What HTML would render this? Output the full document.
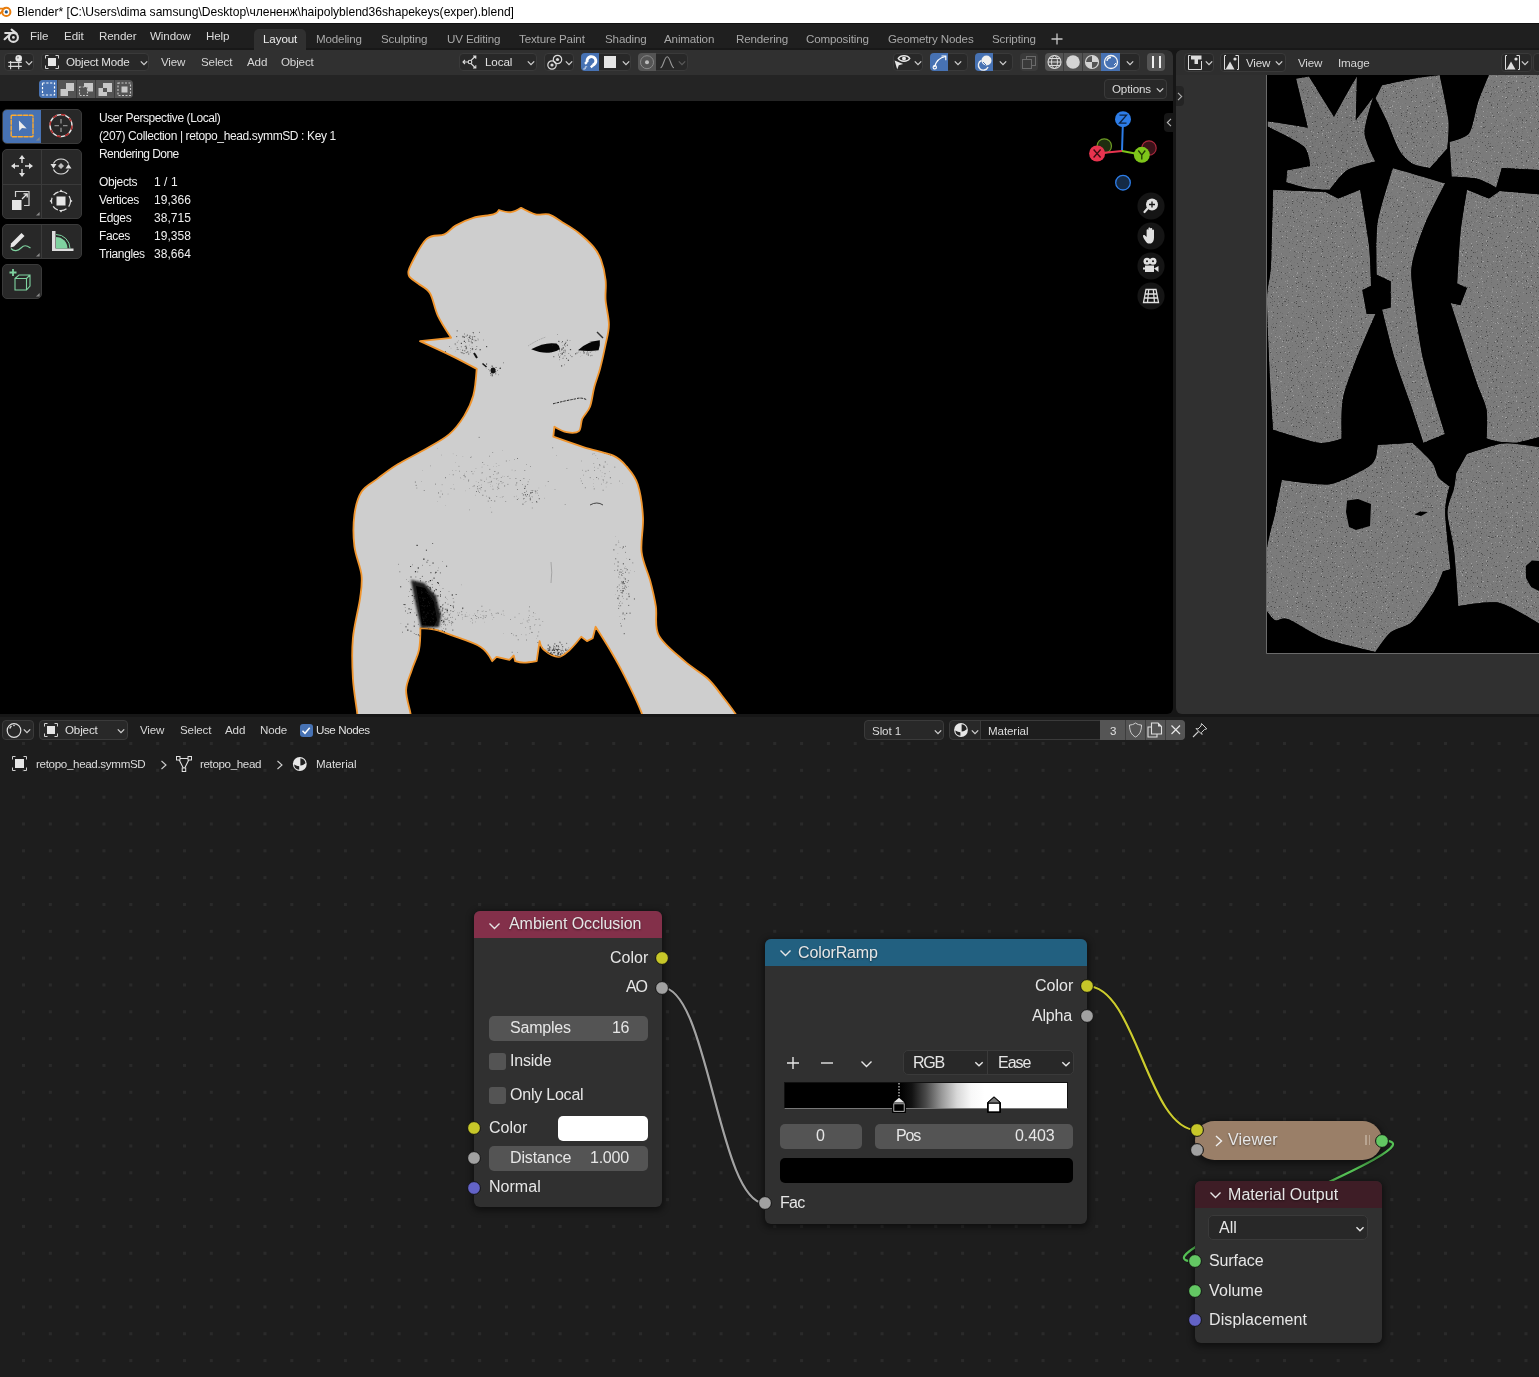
<!DOCTYPE html>
<html><head><meta charset="utf-8">
<style>
*{box-sizing:border-box;margin:0;padding:0}
html,body{width:1539px;height:1377px;overflow:hidden;background:#161616;font-family:"Liberation Sans",sans-serif;position:relative}
.a{position:absolute}
.t{position:absolute;white-space:nowrap;font-size:11.6px;color:#d9d9d9;line-height:1;will-change:transform}
svg{position:absolute;overflow:visible}
</style></head><body>
<div class="a" style="left:0px;top:0px;width:1539px;height:23px;background:#fff;"></div>
<svg style="left:0px;top:4px;" width="14" height="14" viewBox="0 0 14 14"><circle cx="6.3" cy="7.9" r="4.1" fill="#fff" stroke="#e87d0d" stroke-width="2"/><circle cx="6.3" cy="7.9" r="1.6" fill="#265787"/><path d="M0 4.6 H4.5 M0 9.5 L2.8 7" fill="none" stroke="#e87d0d" stroke-width="1.8" stroke-linecap="round"/></svg>
<div class="t" style="left:17.0px;top:6.01px;font-size:12.1px;line-height:12.1px;color:#000;letter-spacing:-0.02px;">Blender* [C:\Users\dima samsung\Desktop\члененж\haipolyblend36shapekeys(exper).blend]</div>
<div class="a" style="left:0px;top:23px;width:1539px;height:27px;background:#1f1f1f;"></div>
<div class="a" style="left:0px;top:23px;width:1539px;height:1px;background:#121212;"></div>
<div class="a" style="left:0px;top:48px;width:1539px;height:2px;background:#181818;"></div>
<svg style="left:0px;top:24px;" width="22" height="22" viewBox="0 0 22 22"><circle cx="13.4" cy="13.4" r="4.5" fill="none" stroke="#dcdcdc" stroke-width="2.1"/><circle cx="13.4" cy="13.4" r="1.4" fill="#dcdcdc"/><path d="M5.2 9 H12.5 M4.6 15.2 L9.6 10.8 M11.6 5.6 L16.6 9.6" fill="none" stroke="#dcdcdc" stroke-width="2.1" stroke-linecap="round"/></svg>
<div class="t" style="left:29.5px;top:30.13px;font-size:11.6px;line-height:11.6px;color:#dcdcdc;letter-spacing:-0.1px;">File</div>
<div class="t" style="left:63.5px;top:30.13px;font-size:11.6px;line-height:11.6px;color:#dcdcdc;letter-spacing:-0.1px;">Edit</div>
<div class="t" style="left:98.5px;top:30.13px;font-size:11.6px;line-height:11.6px;color:#dcdcdc;letter-spacing:-0.1px;">Render</div>
<div class="t" style="left:149.5px;top:30.13px;font-size:11.6px;line-height:11.6px;color:#dcdcdc;letter-spacing:-0.1px;">Window</div>
<div class="t" style="left:205.5px;top:30.13px;font-size:11.6px;line-height:11.6px;color:#dcdcdc;letter-spacing:-0.1px;">Help</div>
<div class="a" style="left:254px;top:29px;width:52px;height:21px;background:#303030;border-radius:5px 5px 0 0"></div>
<div class="t" style="left:262.5px;top:33.23px;font-size:11.6px;line-height:11.6px;color:#ececec;letter-spacing:-0.1px;">Layout</div>
<div class="t" style="left:316.4px;top:33.23px;font-size:11.6px;line-height:11.6px;color:#a8a8a8;letter-spacing:-0.15px;">Modeling</div>
<div class="t" style="left:381.4px;top:33.23px;font-size:11.6px;line-height:11.6px;color:#a8a8a8;letter-spacing:-0.15px;">Sculpting</div>
<div class="t" style="left:447.4px;top:33.23px;font-size:11.6px;line-height:11.6px;color:#a8a8a8;letter-spacing:-0.15px;">UV Editing</div>
<div class="t" style="left:519.4px;top:33.23px;font-size:11.6px;line-height:11.6px;color:#a8a8a8;letter-spacing:-0.15px;">Texture Paint</div>
<div class="t" style="left:605.4px;top:33.23px;font-size:11.6px;line-height:11.6px;color:#a8a8a8;letter-spacing:-0.15px;">Shading</div>
<div class="t" style="left:664.4px;top:33.23px;font-size:11.6px;line-height:11.6px;color:#a8a8a8;letter-spacing:-0.15px;">Animation</div>
<div class="t" style="left:735.8px;top:33.23px;font-size:11.6px;line-height:11.6px;color:#a8a8a8;letter-spacing:-0.15px;">Rendering</div>
<div class="t" style="left:805.9px;top:33.23px;font-size:11.6px;line-height:11.6px;color:#a8a8a8;letter-spacing:-0.15px;">Compositing</div>
<div class="t" style="left:887.8px;top:33.23px;font-size:11.6px;line-height:11.6px;color:#a8a8a8;letter-spacing:-0.15px;">Geometry Nodes</div>
<div class="t" style="left:991.9px;top:33.23px;font-size:11.6px;line-height:11.6px;color:#a8a8a8;letter-spacing:-0.15px;">Scripting</div>
<svg style="left:1051px;top:33px;" width="12" height="12" viewBox="0 0 12 12"><path d="M6 0.5 V11.5 M0.5 6 H11.5" stroke="#c8c8c8" stroke-width="1.3"/></svg>
<div class="a" style="left:0;top:50px;width:1173px;height:664px;background:#000;border-radius:0 6px 6px 0;overflow:hidden">
<div class="a" style="left:0px;top:0px;width:1173px;height:25px;background:#303030;"></div>
<div class="a" style="left:0px;top:25px;width:1173px;height:26px;background:#242424;"></div>
</div>
<div class="a" style="left:4px;top:53px;width:30px;height:18px;background:#282828;border-radius:4px;border:1px solid #3a3a3a;"></div>
<svg style="left:7px;top:55px;" width="18" height="15" viewBox="0 0 18 15"><path d="M1.3 7.4 H14.8 M1.3 11.4 H14.8 M3.6 6 V14.2 M11.7 7 V14.2" stroke="#d9d9d9" stroke-width="1.1"/><circle cx="11.7" cy="3.4" r="3.3" fill="#e8e8e8"/><circle cx="10.9" cy="2.6" r="1.1" fill="#9a9a9a"/></svg>
<svg style="left:23.5px;top:58.5px;" width="10" height="8" viewBox="0 0 10 8"><path d="M1.7999999999999998 2.4 L5 5.6 L8.2 2.4" fill="none" stroke="#cfcfcf" stroke-width="1.3"/></svg>
<div class="a" style="left:41px;top:53px;width:108px;height:18px;background:#282828;border-radius:4px;border:1px solid #3a3a3a;"></div>
<svg style="left:45px;top:55px;" width="14" height="14" viewBox="0 0 14 14"><path d="M0.5 3.5 V0.5 H3.5 M10.5 0.5 H13.5 V3.5 M13.5 10.5 V13.5 H10.5 M3.5 13.5 H0.5 V10.5" fill="none" stroke="#cfcfcf" stroke-width="1"/><rect x="3" y="3" width="8" height="8" fill="#e6e6e6"/></svg>
<div class="t" style="left:66.0px;top:56.43px;font-size:11.6px;line-height:11.6px;color:#e0e0e0;letter-spacing:-0.2px;">Object Mode</div>
<svg style="left:138.5px;top:58.5px;" width="10" height="8" viewBox="0 0 10 8"><path d="M1.7999999999999998 2.4 L5 5.6 L8.2 2.4" fill="none" stroke="#cfcfcf" stroke-width="1.3"/></svg>
<div class="t" style="left:161.4px;top:56.43px;font-size:11.6px;line-height:11.6px;color:#d6d6d6;letter-spacing:-0.15px;">View</div>
<div class="t" style="left:201.4px;top:56.43px;font-size:11.6px;line-height:11.6px;color:#d6d6d6;letter-spacing:-0.15px;">Select</div>
<div class="t" style="left:247.4px;top:56.43px;font-size:11.6px;line-height:11.6px;color:#d6d6d6;letter-spacing:-0.15px;">Add</div>
<div class="t" style="left:281.4px;top:56.43px;font-size:11.6px;line-height:11.6px;color:#d6d6d6;letter-spacing:-0.15px;">Object</div>
<div class="a" style="left:459px;top:53px;width:78px;height:18px;background:#282828;border-radius:4px;border:1px solid #3a3a3a;"></div>
<svg style="left:462px;top:54px;" width="16" height="16" viewBox="0 0 16 16"><path d="M1 8 H7 M3 6 L1 8 L3 10 M9 6.5 L13.5 2 M11 2 H13.8 V4.8 M9 9.5 L13.5 14 M11 14 H13.8 V11.2" fill="none" stroke="#d9d9d9" stroke-width="1.1"/><circle cx="8" cy="8" r="1.8" fill="none" stroke="#d9d9d9" stroke-width="1.1"/></svg>
<div class="t" style="left:484.6px;top:56.43px;font-size:11.6px;line-height:11.6px;color:#e0e0e0;letter-spacing:-0.1px;">Local</div>
<svg style="left:526px;top:58.8px;" width="10" height="8" viewBox="0 0 10 8"><path d="M1.7999999999999998 2.4 L5 5.6 L8.2 2.4" fill="none" stroke="#cfcfcf" stroke-width="1.3"/></svg>
<div class="a" style="left:544px;top:53px;width:30px;height:18px;background:#282828;border-radius:4px;border:1px solid #3a3a3a;"></div>
<svg style="left:547px;top:54px;" width="16" height="16" viewBox="0 0 16 16"><circle cx="5" cy="11" r="4.2" fill="none" stroke="#d9d9d9" stroke-width="1.2"/><circle cx="5" cy="11" r="1.6" fill="#d9d9d9"/><circle cx="10.5" cy="5.5" r="4.2" fill="none" stroke="#d9d9d9" stroke-width="1.2"/><circle cx="10.5" cy="5.5" r="1.6" fill="#d9d9d9"/></svg>
<svg style="left:563.5px;top:58.8px;" width="10" height="8" viewBox="0 0 10 8"><path d="M1.7999999999999998 2.4 L5 5.6 L8.2 2.4" fill="none" stroke="#cfcfcf" stroke-width="1.3"/></svg>
<div class="a" style="left:581px;top:53px;width:50px;height:18px;background:#282828;border-radius:4px;border:1px solid #3a3a3a;"></div>
<div class="a" style="left:581px;top:53px;width:18px;height:18px;background:#4772b3;border-radius:4px;border-radius:4px 0 0 4px"></div>
<svg style="left:582px;top:54px;" width="16" height="16" viewBox="0 0 16 16"><path d="M5.2 8.2 A4.4 4.4 0 1 1 10.4 11.3" stroke="#fff" stroke-width="2.9" fill="none"/><path d="M2.2 9.1 L4.2 7.1 L5.8 8.7 L3.8 10.7 Z M8 12.6 L10 10.6 L11.6 12.2 L9.6 14.2 Z" fill="#fff"/><path d="M1.2 15 H3.2 V12.8 H5.2" fill="none" stroke="#dfe6f2" stroke-width="0.9"/></svg>
<div class="a" style="left:604px;top:56px;width:12px;height:12px;background:#e6e6e6;"></div>
<svg style="left:620.5px;top:58.8px;" width="10" height="8" viewBox="0 0 10 8"><path d="M1.7999999999999998 2.4 L5 5.6 L8.2 2.4" fill="none" stroke="#cfcfcf" stroke-width="1.3"/></svg>
<div class="a" style="left:638px;top:53px;width:50px;height:18px;background:#282828;border-radius:4px;border:1px solid #3a3a3a;"></div>
<div class="a" style="left:638px;top:53px;width:18px;height:18px;background:#545454;border-radius:4px;border-radius:4px 0 0 4px"></div>
<svg style="left:639px;top:54px;" width="16" height="16" viewBox="0 0 16 16"><circle cx="8" cy="8.2" r="6.5" fill="none" stroke="#8a8a8a" stroke-width="1"/><circle cx="8" cy="8.2" r="2" fill="#bdbdbd"/></svg>
<svg style="left:660px;top:55px;" width="16" height="14" viewBox="0 0 16 14"><path d="M0.5 12.8 C3.2 12.8 4.2 1.8 7.2 1.8 C10.2 1.8 11.2 12.8 14 12.8" fill="none" stroke="#9a9a9a" stroke-width="1.1"/></svg>
<svg style="left:677.3px;top:58.8px;" width="10" height="8" viewBox="0 0 10 8"><path d="M1.7999999999999998 2.4 L5 5.6 L8.2 2.4" fill="none" stroke="#5a5a5a" stroke-width="1.3"/></svg>
<div class="a" style="left:893px;top:53px;width:30px;height:18px;background:#282828;border-radius:4px;border:1px solid #3a3a3a;"></div>
<svg style="left:893px;top:53px;" width="18" height="18" viewBox="0 0 18 18"><path d="M5.2 5.4 C7.5 1.6 14.5 1.6 16.8 5.4 C14.5 9.2 7.5 9.2 5.2 5.4Z" fill="none" stroke="#e6e6e6" stroke-width="1.3"/><circle cx="11" cy="5.4" r="1.9" fill="#e6e6e6"/><path d="M1.6 7.6 L10.2 11 L5.8 12.2 L4.2 16.6 Z" fill="#e6e6e6"/></svg>
<svg style="left:912.5px;top:58.8px;" width="10" height="8" viewBox="0 0 10 8"><path d="M1.7999999999999998 2.4 L5 5.6 L8.2 2.4" fill="none" stroke="#cfcfcf" stroke-width="1.3"/></svg>
<div class="a" style="left:930px;top:53px;width:38px;height:18px;background:#282828;border-radius:4px;border:1px solid #3a3a3a;"></div>
<div class="a" style="left:930px;top:53px;width:18px;height:18px;background:#4772b3;border-radius:4px;border-radius:4px 0 0 4px"></div>
<svg style="left:932px;top:54px;" width="15" height="16" viewBox="0 0 15 16"><path d="M2.5 13 C4 7 8 3.5 13.5 2.5" fill="none" stroke="#fff" stroke-width="1.2"/><path d="M9.5 2 H13.8 V6.3" fill="none" stroke="#fff" stroke-width="1.2"/><circle cx="2.8" cy="13.3" r="1.7" fill="none" stroke="#fff" stroke-width="1.1"/></svg>
<svg style="left:953px;top:58.8px;" width="10" height="8" viewBox="0 0 10 8"><path d="M1.7999999999999998 2.4 L5 5.6 L8.2 2.4" fill="none" stroke="#cfcfcf" stroke-width="1.3"/></svg>
<div class="a" style="left:975px;top:53px;width:38px;height:18px;background:#282828;border-radius:4px;border:1px solid #3a3a3a;"></div>
<div class="a" style="left:975px;top:53px;width:18px;height:18px;background:#4772b3;border-radius:4px;border-radius:4px 0 0 4px"></div>
<svg style="left:977px;top:54px;" width="15" height="16" viewBox="0 0 15 16"><circle cx="9.5" cy="6.5" r="5" fill="#f0f0f0"/><path d="M4.5 6.5 A5 5 0 1 0 11 13" fill="none" stroke="#f0f0f0" stroke-width="1.4"/><path d="M6 8 L9 11" stroke="#4772b3" stroke-width="1"/></svg>
<svg style="left:998px;top:58.8px;" width="10" height="8" viewBox="0 0 10 8"><path d="M1.7999999999999998 2.4 L5 5.6 L8.2 2.4" fill="none" stroke="#cfcfcf" stroke-width="1.3"/></svg>
<div class="a" style="left:1020px;top:53px;width:18px;height:18px;background:#3a3a3a;border-radius:4px;"></div>
<svg style="left:1021px;top:54px;" width="16" height="16" viewBox="0 0 16 16"><rect x="5.5" y="2.5" width="9" height="9" fill="none" stroke="#6a6a6a" stroke-width="1"/><rect x="1.5" y="5.5" width="9" height="9" fill="#3a3a3a" stroke="#6a6a6a" stroke-width="1"/></svg>
<div class="a" style="left:1045px;top:53px;width:95px;height:18px;background:#282828;border-radius:4px;border:1px solid #3a3a3a;"></div>
<div class="a" style="left:1045px;top:53px;width:75px;height:18px;background:#545454;border-radius:4px;border-radius:4px 0 0 4px"></div>
<div class="a" style="left:1063px;top:53px;width:1px;height:18px;background:#3d3d3d;"></div>
<div class="a" style="left:1082px;top:53px;width:1px;height:18px;background:#3d3d3d;"></div>
<div class="a" style="left:1101px;top:53px;width:1px;height:18px;background:#3d3d3d;"></div>
<div class="a" style="left:1101px;top:53px;width:19px;height:18px;background:#4772b3;"></div>
<svg style="left:1046px;top:54px;" width="17" height="16" viewBox="0 0 17 16"><circle cx="8.5" cy="8" r="6.5" fill="none" stroke="#dadada" stroke-width="1.1"/><ellipse cx="8.5" cy="8" rx="3" ry="6.5" fill="none" stroke="#dadada" stroke-width="1"/><path d="M2 8 H15 M3 4.5 H14 M3 11.5 H14" stroke="#dadada" stroke-width="1"/></svg>
<svg style="left:1064px;top:54px;" width="18" height="16" viewBox="0 0 18 16"><circle cx="9" cy="8" r="6.8" fill="#d4d4d4"/></svg>
<svg style="left:1083px;top:54px;" width="18" height="16" viewBox="0 0 18 16"><circle cx="9" cy="8" r="6.5" fill="none" stroke="#d4d4d4" stroke-width="1.2"/><path d="M9 1.5 A6.5 6.5 0 0 1 15.5 8 L9 8 Z" fill="#d4d4d4"/><path d="M2.5 8 A6.5 6.5 0 0 0 9 14.5 L9 8 Z" fill="#d4d4d4"/></svg>
<svg style="left:1102px;top:54px;" width="18" height="16" viewBox="0 0 18 16"><circle cx="9" cy="8" r="6.5" fill="none" stroke="#f4f4f4" stroke-width="1.3"/><path d="M5 7 A4 4 0 0 1 9 3.5" fill="none" stroke="#f4f4f4" stroke-width="1.3"/><path d="M12 11 L14 9" stroke="#f4f4f4" stroke-width="1"/></svg>
<svg style="left:1125px;top:58.8px;" width="10" height="8" viewBox="0 0 10 8"><path d="M1.7999999999999998 2.4 L5 5.6 L8.2 2.4" fill="none" stroke="#cfcfcf" stroke-width="1.3"/></svg>
<div class="a" style="left:1147px;top:53px;width:18px;height:18px;background:#545454;border-radius:4px;"></div>
<div class="a" style="left:1152px;top:56px;width:2.4px;height:12px;background:#f0f0f0;"></div>
<div class="a" style="left:1158.5px;top:56px;width:2.4px;height:12px;background:#f0f0f0;"></div>
<div class="a" style="left:39px;top:80px;width:94px;height:18px;background:#545454;border-radius:4px;"></div>
<div class="a" style="left:39px;top:80px;width:18px;height:18px;background:#4772b3;border-radius:4px;border-radius:4px 0 0 4px"></div>
<div class="a" style="left:57px;top:80px;width:1px;height:18px;background:#3d3d3d;"></div>
<div class="a" style="left:76px;top:80px;width:1px;height:18px;background:#3d3d3d;"></div>
<div class="a" style="left:95px;top:80px;width:1px;height:18px;background:#3d3d3d;"></div>
<div class="a" style="left:114px;top:80px;width:1px;height:18px;background:#3d3d3d;"></div>
<svg style="left:40px;top:81px;" width="17" height="16" viewBox="0 0 17 16"><rect x="2.5" y="2" width="12" height="12" fill="none" stroke="#fff" stroke-width="1.2" stroke-dasharray="2.2 1.6"/></svg>
<svg style="left:59px;top:81px;" width="17" height="16" viewBox="0 0 17 16"><path d="M1.5 8 H7 V2 H15 V10 H9 V15 H1.5 Z" fill="#c8c8c8"/></svg>
<svg style="left:78px;top:81px;" width="17" height="16" viewBox="0 0 17 16"><rect x="1.5" y="6" width="8" height="8.5" fill="none" stroke="#c8c8c8" stroke-width="1.1" stroke-dasharray="1.8 1.4"/><path d="M6 2 H15 V10.5 H9.5 V6 H6 Z" fill="#c8c8c8"/></svg>
<svg style="left:97px;top:81px;" width="17" height="16" viewBox="0 0 17 16"><path d="M1.5 7 H6 V2 H15 V11 H10 V15 H1.5 Z M6 7 V11 H10 V7 Z" fill="#c8c8c8" fill-rule="evenodd"/></svg>
<svg style="left:116px;top:81px;" width="17" height="16" viewBox="0 0 17 16"><rect x="2" y="2" width="12.5" height="12.5" fill="none" stroke="#c8c8c8" stroke-width="1.1" stroke-dasharray="2 1.5"/><rect x="5.5" y="5.5" width="6" height="6" fill="#c8c8c8"/></svg>
<div class="a" style="left:1104px;top:79px;width:63px;height:20px;background:#282828;border-radius:4px;border:1px solid #3a3a3a;"></div>
<div class="t" style="left:1111.5px;top:83.43px;font-size:11.6px;line-height:11.6px;color:#dcdcdc;letter-spacing:-0.15px;">Options</div>
<svg style="left:1155px;top:85.5px;" width="10" height="8" viewBox="0 0 10 8"><path d="M1.7999999999999998 2.4 L5 5.6 L8.2 2.4" fill="none" stroke="#cfcfcf" stroke-width="1.3"/></svg>
<div class="a" style="left:2px;top:109px;width:80px;height:35px;background:#282828;border-radius:5px;border:1px solid #3a3a3a;"></div>
<div class="a" style="left:3px;top:110px;width:38.3px;height:33px;background:#4772b3;border-radius:4px 0 0 4px"></div>
<div class="a" style="left:2px;top:149px;width:80px;height:70px;background:#282828;border-radius:5px;border:1px solid #3a3a3a;"></div>
<div class="a" style="left:41px;top:149px;width:1px;height:70px;background:#3a3a3a;"></div>
<div class="a" style="left:2px;top:183.5px;width:80px;height:1px;background:#3a3a3a;"></div>
<div class="a" style="left:2px;top:224px;width:80px;height:35px;background:#282828;border-radius:5px;border:1px solid #3a3a3a;"></div>
<div class="a" style="left:41px;top:224px;width:1px;height:35px;background:#3a3a3a;"></div>
<div class="a" style="left:2px;top:264px;width:40px;height:35px;background:#282828;border-radius:5px;border:1px solid #3a3a3a;"></div>
<svg style="left:35.699999999999996px;top:137.20000000000002px;" width="4" height="4" viewBox="0 0 4 4"><path d="M3.6 0 V3.6 H0 Z" fill="#8a8a8a"/></svg>
<svg style="left:35.699999999999996px;top:212.4px;" width="4" height="4" viewBox="0 0 4 4"><path d="M3.6 0 V3.6 H0 Z" fill="#8a8a8a"/></svg>
<svg style="left:35.699999999999996px;top:252.6px;" width="4" height="4" viewBox="0 0 4 4"><path d="M3.6 0 V3.6 H0 Z" fill="#8a8a8a"/></svg>
<svg style="left:35.699999999999996px;top:292.59999999999997px;" width="4" height="4" viewBox="0 0 4 4"><path d="M3.6 0 V3.6 H0 Z" fill="#8a8a8a"/></svg>
<svg style="left:10px;top:114px;" width="24" height="24" viewBox="0 0 24 24"><rect x="1.2" y="1.3" width="21.8" height="21.5" rx="0.8" fill="none" stroke="#ffab2e" stroke-width="1.4" stroke-dasharray="4.2 1.6" stroke-linecap="round"/><path d="M8.9 6.6 L16.7 14.4 L12 14 L9.2 17.1 Z" fill="#ececec"/></svg>
<svg style="left:49px;top:113px;" width="24" height="24" viewBox="0 0 24 24"><circle cx="12" cy="12.6" r="11" fill="none" stroke="#e8e8e8" stroke-width="1.4"/><circle cx="12" cy="12.6" r="11" fill="none" stroke="#b02a2a" stroke-width="1.5" stroke-dasharray="4.3 4.3"/><path d="M12 6 V10.5 M12 14.7 V19 M5.5 12.6 H10 M14 12.6 H18.5" stroke="#8c8c8c" stroke-width="1.4"/></svg>
<svg style="left:10px;top:154px;" width="24" height="24" viewBox="0 0 24 24"><path d="M12 1 L15 5 H9 Z M12 23 L15 19 H9 Z M1 12 L5 9 V15 Z M23 12 L19 9 V15 Z" fill="#e0e0e0"/><path d="M12 5 V9 M12 15 V19 M5 12 H9 M15 12 H19" stroke="#e0e0e0" stroke-width="1.4"/></svg>
<svg style="left:49px;top:154px;" width="24" height="24" viewBox="0 0 24 24"><path d="M4.5 9.5 A8.5 8.5 0 0 1 19.5 9.5 M19.5 15.5 A8.5 8.5 0 0 1 4.5 15.5" fill="none" stroke="#e0e0e0" stroke-width="1.2"/><path d="M12 9 L15 12 L12 15 L9 12 Z" fill="#bdbdbd"/><path d="M1.5 10 H7.5 L4.5 14.5 Z M16.5 14.5 H22.5 L19.5 10 Z" fill="#e0e0e0"/></svg>
<svg style="left:10px;top:189px;" width="24" height="24" viewBox="0 0 24 24"><path d="M5.5 8 V2.5 H19 V16.5 H14" fill="none" stroke="#d0d0d0" stroke-width="1.2"/><rect x="2" y="11" width="9.5" height="10" fill="#e6e6e6"/><path d="M12 10 L17 5 M13.5 4.8 H17.2 V8.5" fill="none" stroke="#e6e6e6" stroke-width="1.3"/></svg>
<svg style="left:49px;top:189px;" width="24" height="24" viewBox="0 0 24 24"><circle cx="12" cy="12" r="9.5" fill="none" stroke="#e0e0e0" stroke-width="1.2" stroke-dasharray="6 3"/><rect x="7.5" y="7.5" width="9" height="9" fill="#e6e6e6"/><path d="M12 0.5 L14 3 H10 Z M12 23.5 L14 21 H10 Z M0.5 12 L3 10 V14 Z M23.5 12 L21 10 V14 Z" fill="#e0e0e0"/></svg>
<svg style="left:9px;top:229px;" width="25" height="25" viewBox="0 0 25 25"><path d="M2 14.5 L12.5 4 L15.5 7 L5 17.5 L1.5 18.5 Z" fill="#e6e6e6"/><path d="M2 19.5 C5 23 9 22 12 19 C15 16 17 16 21.5 19" fill="none" stroke="#7fd3a0" stroke-width="1.2"/></svg>
<svg style="left:50px;top:229px;" width="25" height="25" viewBox="0 0 25 25"><path d="M2 2 H5.5 V19.5 H23.5 V22 H2 Z" fill="#dedede"/><path d="M6 8 A11.5 11.5 0 0 1 17.5 19.5 H6 Z" fill="#7fd3a0"/><path d="M6 5.5 A14 14 0 0 1 20 19.5" fill="none" stroke="#7fd3a0" stroke-width="1"/></svg>
<svg style="left:8px;top:268px;" width="26" height="26" viewBox="0 0 26 26"><path d="M5 1 V8 M1.5 4.5 H8.5" stroke="#7fd3a0" stroke-width="1.8"/><path d="M7 10.5 L11 7 H22 V18 L18.5 22 H7 Z M7 10.5 H18.5 V22 M18.5 10.5 L22 7" fill="none" stroke="#7fd3a0" stroke-width="1.1"/></svg>
<div class="t" style="left:99.0px;top:111.89px;font-size:12px;line-height:12px;color:#f0f0f0;letter-spacing:-0.42px;text-shadow:0 1px 1px #000">User Perspective (Local)</div>
<div class="t" style="left:99.0px;top:129.69px;font-size:12px;line-height:12px;color:#f0f0f0;letter-spacing:-0.38px;text-shadow:0 1px 1px #000">(207) Collection | retopo_head.symmSD : Key 1</div>
<div class="t" style="left:99.0px;top:147.69px;font-size:12px;line-height:12px;color:#f0f0f0;letter-spacing:-0.55px;text-shadow:0 1px 1px #000">Rendering Done</div>
<div class="t" style="left:99.0px;top:175.99px;font-size:12px;line-height:12px;color:#f0f0f0;letter-spacing:-0.35px;">Objects</div>
<div class="t" style="left:154.0px;top:175.99px;font-size:12px;line-height:12px;color:#f0f0f0;letter-spacing:0.05px;">1 / 1</div>
<div class="t" style="left:99.0px;top:193.99px;font-size:12px;line-height:12px;color:#f0f0f0;letter-spacing:-0.35px;">Vertices</div>
<div class="t" style="left:154.0px;top:193.99px;font-size:12px;line-height:12px;color:#f0f0f0;letter-spacing:0.05px;">19,366</div>
<div class="t" style="left:99.0px;top:211.99px;font-size:12px;line-height:12px;color:#f0f0f0;letter-spacing:-0.35px;">Edges</div>
<div class="t" style="left:154.0px;top:211.99px;font-size:12px;line-height:12px;color:#f0f0f0;letter-spacing:0.05px;">38,715</div>
<div class="t" style="left:99.0px;top:229.99px;font-size:12px;line-height:12px;color:#f0f0f0;letter-spacing:-0.35px;">Faces</div>
<div class="t" style="left:154.0px;top:229.99px;font-size:12px;line-height:12px;color:#f0f0f0;letter-spacing:0.05px;">19,358</div>
<div class="t" style="left:99.0px;top:247.99px;font-size:12px;line-height:12px;color:#f0f0f0;letter-spacing:-0.35px;">Triangles</div>
<div class="t" style="left:154.0px;top:247.99px;font-size:12px;line-height:12px;color:#f0f0f0;letter-spacing:0.05px;">38,664</div>
<svg style="left:1085px;top:105px;" width="80" height="90" viewBox="0 0 80 90">
<line x1="37" y1="46" x2="38" y2="14" stroke="#2d7de8" stroke-width="2"/>
<circle cx="19.3" cy="41" r="7.2" fill="#1f2d10" stroke="#6c9b23" stroke-width="1.2"/>
<circle cx="64" cy="43" r="7.2" fill="#3a1219" stroke="#a8283c" stroke-width="1.2"/>
<line x1="37" y1="46" x2="12" y2="48.5" stroke="#e8344f" stroke-width="2"/>
<line x1="37" y1="46" x2="56.8" y2="49.8" stroke="#7ec51a" stroke-width="2"/>
<circle cx="38" cy="14.2" r="8" fill="#2d7de8"/>
<circle cx="12.1" cy="48.5" r="8" fill="#e8344f"/>
<circle cx="56.8" cy="49.8" r="8" fill="#7ec51a"/>
<circle cx="38" cy="77.7" r="7.3" fill="#142a45" stroke="#2d7de8" stroke-width="1.3"/>
<path d="M34.5 10.2 H41.5 L34.5 18.2 H41.5" fill="none" stroke="#0d2240" stroke-width="1.3"/>
<path d="M8.6 44.5 L15.6 52.5 M15.6 44.5 L8.6 52.5" stroke="#3a0d12" stroke-width="1.3"/>
<path d="M53.3 45.5 L56.8 50 L60.3 45.5 M56.8 50 V54.5" fill="none" stroke="#213a05" stroke-width="1.3"/>
</svg>
<svg style="left:1137px;top:191.7px;" width="28" height="28" viewBox="0 0 28 28"><circle cx="14" cy="14" r="13.6" fill="#151515"/></svg>
<svg style="left:1137px;top:221.8px;" width="28" height="28" viewBox="0 0 28 28"><circle cx="14" cy="14" r="13.6" fill="#151515"/></svg>
<svg style="left:1137px;top:251.89999999999998px;" width="28" height="28" viewBox="0 0 28 28"><circle cx="14" cy="14" r="13.6" fill="#151515"/></svg>
<svg style="left:1137px;top:282px;" width="28" height="28" viewBox="0 0 28 28"><circle cx="14" cy="14" r="13.6" fill="#151515"/></svg>
<svg style="left:1142px;top:196.5px;" width="18" height="18" viewBox="0 0 18 18"><circle cx="10" cy="7.5" r="6" fill="#e0e0e0"/><path d="M10 4.5 V10.5 M7 7.5 H13" stroke="#151515" stroke-width="1.3"/><path d="M6 11 L2.5 15" stroke="#e0e0e0" stroke-width="2.2" stroke-linecap="round"/></svg>
<svg style="left:1142px;top:226px;" width="18" height="18" viewBox="0 0 18 18"><path d="M4.2 16 C2.8 14 1.2 11.5 1 10.2 C0.8 9 2.2 8.6 3 9.4 L4.6 11 V4.2 C4.6 3 6.4 3 6.4 4.2 V9 V2.4 C6.4 1.2 8.3 1.2 8.3 2.4 V9 V2.8 C8.3 1.6 10.2 1.6 10.2 2.8 V9 V4.2 C10.2 3.1 12 3.1 12 4.2 V11.5 C12 14.5 11 16.6 9 17.4 H6.2 C5.3 17.4 4.8 16.9 4.2 16Z" fill="#e0e0e0"/></svg>
<svg style="left:1142px;top:257px;" width="18" height="18" viewBox="0 0 18 18"><circle cx="5" cy="4.3" r="3.5" fill="#e0e0e0"/><circle cx="11" cy="4.3" r="3.5" fill="#e0e0e0"/><circle cx="5" cy="4.3" r="1" fill="#151515"/><circle cx="11" cy="4.3" r="1" fill="#151515"/><rect x="3" y="8.5" width="9" height="6.5" fill="#e0e0e0"/><path d="M12 11.5 L16.5 9 V15 Z" fill="#e0e0e0"/><rect x="1" y="10.5" width="2" height="2" fill="#e0e0e0"/></svg>
<svg style="left:1142px;top:287px;" width="18" height="18" viewBox="0 0 18 18"><path d="M4 2.5 H14 L16.5 15.5 H1.5 Z M6.7 2.5 L5.5 15.5 M11.3 2.5 L12.5 15.5 M3 7 H15 M2.3 11 H15.7" fill="none" stroke="#e0e0e0" stroke-width="1.3"/></svg>
<div class="a" style="left:1164px;top:113px;width:9px;height:19px;background:#161616;border-radius:4px 0 0 4px"></div>
<svg style="left:1166px;top:118px;" width="6" height="9" viewBox="0 0 6 9"><path d="M5 0.8 L1.3 4.5 L5 8.2" fill="none" stroke="#b8b8b8" stroke-width="1.1"/></svg>
<svg style="left:0;top:0" width="1539" height="1377" viewBox="0 0 1539 1377">
<defs><filter id="bl1" x="-50%" y="-50%" width="200%" height="200%"><feGaussianBlur stdDeviation="2"/></filter>
<filter id="bl2" x="-50%" y="-50%" width="200%" height="200%"><feGaussianBlur stdDeviation="1.2"/></filter>
<clipPath id="vpclip"><rect x="0" y="101" width="1173" height="613"/></clipPath>
<clipPath id="figclip"><path d="M498.9 210.0 C498.9 210.0 507.4 212.6 511.1 212.2 C514.8 211.8 521.1 207.8 521.1 207.8 C521.1 207.8 531.0 213.3 535.6 214.4 C540.2 215.5 544.5 213.1 548.9 214.4 C553.3 215.7 557.4 219.2 562.2 222.2 C567.0 225.2 572.6 228.1 577.8 232.2 C583.0 236.3 589.4 242.1 593.3 246.7 C597.2 251.3 599.0 254.4 601.1 260.0 C603.2 265.6 604.9 273.3 605.6 280.0 C606.4 286.7 605.1 292.6 605.6 300.0 C606.1 307.4 608.9 317.0 608.9 324.4 C608.9 331.8 607.1 337.0 605.6 344.4 C604.1 351.8 601.9 361.8 600.0 368.9 C598.1 375.9 596.1 380.4 594.4 386.7 C592.7 393.0 592.0 401.3 590.0 406.7 C588.0 412.1 584.1 414.8 582.2 418.9 C580.4 423.0 581.5 428.9 578.9 431.1 C576.3 433.3 570.8 432.9 566.7 432.2 C562.6 431.5 554.4 426.7 554.4 426.7 C554.4 426.7 553.3 436.7 553.3 436.7 C553.3 436.7 574.1 444.1 584.1 447.3 C594.1 450.5 606.2 452.4 613.3 455.6 C620.4 458.8 622.6 461.9 626.7 466.7 C630.8 471.5 635.1 475.9 637.8 484.4 C640.5 492.9 642.4 506.3 643.0 517.6 C643.6 528.9 640.4 541.6 641.6 552.1 C642.8 562.6 647.8 571.7 650.2 580.8 C652.6 589.9 654.5 597.6 655.9 606.7 C657.3 615.8 654.0 626.3 658.8 635.4 C663.6 644.5 676.5 654.0 684.6 661.2 C692.7 668.4 701.4 672.8 707.6 678.5 C713.8 684.2 717.5 690.0 722.0 695.7 C726.5 701.4 732.4 709.2 734.9 712.9 C737.4 716.6 737.0 718.0 737.0 718.0 C737.0 718.0 640.0 718.0 640.0 718.0 C640.0 718.0 644.2 720.0 641.6 712.9 C639.0 705.8 629.6 686.1 624.3 675.6 C619.0 665.1 614.8 657.9 610.0 649.8 C605.2 641.7 595.6 626.8 595.6 626.8 C595.6 626.8 592.7 638.3 592.7 638.3 C592.7 638.3 587.0 641.1 587.0 641.1 C587.0 641.1 581.2 636.8 581.2 636.8 C581.2 636.8 573.6 646.4 569.8 649.8 C566.0 653.1 562.6 656.9 558.3 656.9 C554.0 656.9 547.0 652.4 543.9 649.8 C540.8 647.2 539.6 641.1 539.6 641.1 C539.6 641.1 536.7 661.2 536.7 661.2 C536.7 661.2 527.4 662.7 523.8 662.7 C520.2 662.7 515.2 661.2 515.2 661.2 C515.2 661.2 513.7 655.5 513.7 655.5 C513.7 655.5 509.4 659.8 509.4 659.8 C509.4 659.8 496.5 656.9 496.5 656.9 C496.5 656.9 492.2 661.2 492.2 661.2 C492.2 661.2 487.4 651.2 480.7 646.9 C474.0 642.6 459.6 638.3 452.0 635.4 C444.4 632.5 440.1 630.9 434.8 629.7 C429.5 628.5 420.4 628.2 420.4 628.2 C420.4 628.2 420.4 642.8 419.0 649.8 C417.6 656.8 413.9 663.2 411.8 669.9 C409.7 676.6 406.3 682.8 406.1 690.0 C405.9 697.2 409.6 708.2 410.4 712.9 C411.2 717.6 411.0 718.0 411.0 718.0 C411.0 718.0 357.0 718.0 357.0 718.0 C357.0 718.0 357.9 719.5 357.2 712.9 C356.5 706.3 353.6 690.9 352.9 678.5 C352.2 666.1 351.7 651.7 352.9 638.3 C354.1 624.9 358.7 608.6 360.1 598.1 C361.5 587.6 362.4 583.7 361.5 575.1 C360.6 566.5 355.6 556.5 354.4 546.4 C353.2 536.3 353.2 523.9 354.4 514.8 C355.6 505.7 357.7 497.8 361.5 491.8 C365.3 485.8 371.3 483.4 377.3 478.9 C383.3 474.3 389.2 469.5 397.4 464.5 C405.5 459.5 417.6 453.7 426.2 448.7 C434.8 443.7 442.7 439.9 449.1 434.4 C455.5 428.9 460.4 422.1 464.4 415.6 C468.4 409.1 471.2 403.4 473.3 395.6 C475.4 387.8 476.7 368.9 476.7 368.9 C476.7 368.9 460.6 360.2 451.1 355.6 C441.7 351.0 420.0 341.1 420.0 341.1 C420.0 341.1 451.1 337.8 451.1 337.8 C451.1 337.8 441.3 323.0 437.8 315.6 C434.3 308.2 433.3 298.7 430.0 293.3 C426.7 287.9 421.3 286.2 417.8 283.3 C414.3 280.4 410.0 278.8 408.9 275.6 C407.8 272.5 408.1 270.5 411.1 264.4 C414.1 258.3 421.1 243.9 426.7 238.9 C432.2 233.9 439.6 236.6 444.4 234.4 C449.2 232.2 450.8 228.4 455.6 225.6 C460.4 222.8 467.0 219.7 473.3 217.8 C479.6 215.9 489.0 215.7 493.3 214.4 C497.6 213.1 498.9 210.0 498.9 210.0 Z"/></clipPath></defs>
<g clip-path="url(#vpclip)">
<path d="M498.9 210.0 C498.9 210.0 507.4 212.6 511.1 212.2 C514.8 211.8 521.1 207.8 521.1 207.8 C521.1 207.8 531.0 213.3 535.6 214.4 C540.2 215.5 544.5 213.1 548.9 214.4 C553.3 215.7 557.4 219.2 562.2 222.2 C567.0 225.2 572.6 228.1 577.8 232.2 C583.0 236.3 589.4 242.1 593.3 246.7 C597.2 251.3 599.0 254.4 601.1 260.0 C603.2 265.6 604.9 273.3 605.6 280.0 C606.4 286.7 605.1 292.6 605.6 300.0 C606.1 307.4 608.9 317.0 608.9 324.4 C608.9 331.8 607.1 337.0 605.6 344.4 C604.1 351.8 601.9 361.8 600.0 368.9 C598.1 375.9 596.1 380.4 594.4 386.7 C592.7 393.0 592.0 401.3 590.0 406.7 C588.0 412.1 584.1 414.8 582.2 418.9 C580.4 423.0 581.5 428.9 578.9 431.1 C576.3 433.3 570.8 432.9 566.7 432.2 C562.6 431.5 554.4 426.7 554.4 426.7 C554.4 426.7 553.3 436.7 553.3 436.7 C553.3 436.7 574.1 444.1 584.1 447.3 C594.1 450.5 606.2 452.4 613.3 455.6 C620.4 458.8 622.6 461.9 626.7 466.7 C630.8 471.5 635.1 475.9 637.8 484.4 C640.5 492.9 642.4 506.3 643.0 517.6 C643.6 528.9 640.4 541.6 641.6 552.1 C642.8 562.6 647.8 571.7 650.2 580.8 C652.6 589.9 654.5 597.6 655.9 606.7 C657.3 615.8 654.0 626.3 658.8 635.4 C663.6 644.5 676.5 654.0 684.6 661.2 C692.7 668.4 701.4 672.8 707.6 678.5 C713.8 684.2 717.5 690.0 722.0 695.7 C726.5 701.4 732.4 709.2 734.9 712.9 C737.4 716.6 737.0 718.0 737.0 718.0 C737.0 718.0 640.0 718.0 640.0 718.0 C640.0 718.0 644.2 720.0 641.6 712.9 C639.0 705.8 629.6 686.1 624.3 675.6 C619.0 665.1 614.8 657.9 610.0 649.8 C605.2 641.7 595.6 626.8 595.6 626.8 C595.6 626.8 592.7 638.3 592.7 638.3 C592.7 638.3 587.0 641.1 587.0 641.1 C587.0 641.1 581.2 636.8 581.2 636.8 C581.2 636.8 573.6 646.4 569.8 649.8 C566.0 653.1 562.6 656.9 558.3 656.9 C554.0 656.9 547.0 652.4 543.9 649.8 C540.8 647.2 539.6 641.1 539.6 641.1 C539.6 641.1 536.7 661.2 536.7 661.2 C536.7 661.2 527.4 662.7 523.8 662.7 C520.2 662.7 515.2 661.2 515.2 661.2 C515.2 661.2 513.7 655.5 513.7 655.5 C513.7 655.5 509.4 659.8 509.4 659.8 C509.4 659.8 496.5 656.9 496.5 656.9 C496.5 656.9 492.2 661.2 492.2 661.2 C492.2 661.2 487.4 651.2 480.7 646.9 C474.0 642.6 459.6 638.3 452.0 635.4 C444.4 632.5 440.1 630.9 434.8 629.7 C429.5 628.5 420.4 628.2 420.4 628.2 C420.4 628.2 420.4 642.8 419.0 649.8 C417.6 656.8 413.9 663.2 411.8 669.9 C409.7 676.6 406.3 682.8 406.1 690.0 C405.9 697.2 409.6 708.2 410.4 712.9 C411.2 717.6 411.0 718.0 411.0 718.0 C411.0 718.0 357.0 718.0 357.0 718.0 C357.0 718.0 357.9 719.5 357.2 712.9 C356.5 706.3 353.6 690.9 352.9 678.5 C352.2 666.1 351.7 651.7 352.9 638.3 C354.1 624.9 358.7 608.6 360.1 598.1 C361.5 587.6 362.4 583.7 361.5 575.1 C360.6 566.5 355.6 556.5 354.4 546.4 C353.2 536.3 353.2 523.9 354.4 514.8 C355.6 505.7 357.7 497.8 361.5 491.8 C365.3 485.8 371.3 483.4 377.3 478.9 C383.3 474.3 389.2 469.5 397.4 464.5 C405.5 459.5 417.6 453.7 426.2 448.7 C434.8 443.7 442.7 439.9 449.1 434.4 C455.5 428.9 460.4 422.1 464.4 415.6 C468.4 409.1 471.2 403.4 473.3 395.6 C475.4 387.8 476.7 368.9 476.7 368.9 C476.7 368.9 460.6 360.2 451.1 355.6 C441.7 351.0 420.0 341.1 420.0 341.1 C420.0 341.1 451.1 337.8 451.1 337.8 C451.1 337.8 441.3 323.0 437.8 315.6 C434.3 308.2 433.3 298.7 430.0 293.3 C426.7 287.9 421.3 286.2 417.8 283.3 C414.3 280.4 410.0 278.8 408.9 275.6 C407.8 272.5 408.1 270.5 411.1 264.4 C414.1 258.3 421.1 243.9 426.7 238.9 C432.2 233.9 439.6 236.6 444.4 234.4 C449.2 232.2 450.8 228.4 455.6 225.6 C460.4 222.8 467.0 219.7 473.3 217.8 C479.6 215.9 489.0 215.7 493.3 214.4 C497.6 213.1 498.9 210.0 498.9 210.0 Z" fill="#cecece" stroke="#f0952e" stroke-width="1.8" stroke-linejoin="round"/>
<g clip-path="url(#figclip)">
<path d="M531.2 349.3 Q545 341.5 556.5 343.6 Q559.5 345.5 559.8 349 Q549 356.5 531.2 349.3Z" fill="#050505"/>
<path d="M578 350.2 Q587 341.5 599.8 340.3 Q600.5 345 598.6 350.2 Q589 351.6 578 350.2Z" fill="#050505"/>
<path d="M553 403.8 Q566 400.5 575 399 Q581 397 586.2 399.5" fill="none" stroke="#222" stroke-width="1" stroke-dasharray="2.5 1"/>
<path d="M528 346 Q537 340 546 337" fill="none" stroke="#9a9a9a" stroke-width="0.8" stroke-dasharray="1.5 1"/>
<path d="M597 332 L603 338" stroke="#333" stroke-width="1.4"/>
<path d="M482.5 363.5 L486.5 367" stroke="#111" stroke-width="1.5"/>
<ellipse cx="493" cy="370.5" rx="2.4" ry="3" fill="#111"/>
<path d="M474 353 L477 358" stroke="#111" stroke-width="2"/>
<g filter="url(#bl2)"><path d="M411 580 L424 583 L436 596 L441 616 L439 627 L421 628 L416 606 Z" fill="#1a1a1a"/></g>
<path d="M416 586 L425 588 L434 602 L437 620 L434 626 L422 625 L419 604 Z" fill="#000"/>
<path d="M590 505 Q597 501 603 505" fill="none" stroke="#333" stroke-width="0.9"/>
<path d="M551 562 Q552.5 572 551 583" fill="none" stroke="#9a9a9a" stroke-width="0.8"/>
<g fill="#1a1a1a" opacity="0.7"><rect x="468.2" y="339.5" width="0.9" height="0.9"/><rect x="477.8" y="339.6" width="0.7" height="0.7"/><rect x="477.8" y="339.3" width="0.4" height="0.4"/><rect x="467.6" y="338.5" width="0.4" height="0.4"/><rect x="458.3" y="340.6" width="0.5" height="0.5"/><rect x="471.6" y="342.2" width="1.2" height="1.2"/><rect x="463.8" y="336.6" width="1.2" height="1.2"/><rect x="483.3" y="339.7" width="0.6" height="0.6"/><rect x="472.2" y="339.2" width="0.6" height="0.6"/><rect x="471.8" y="336.3" width="0.8" height="0.8"/><rect x="465.7" y="335.8" width="0.8" height="0.8"/><rect x="472.3" y="338.4" width="0.5" height="0.5"/><rect x="466.9" y="335.1" width="0.6" height="0.6"/><rect x="463.4" y="336.3" width="0.6" height="0.6"/><rect x="473.0" y="333.5" width="0.6" height="0.6"/><rect x="462.4" y="336.3" width="1.1" height="1.1"/><rect x="469.3" y="335.5" width="1.2" height="1.2"/><rect x="475.4" y="340.1" width="1.0" height="1.0"/><rect x="474.7" y="340.8" width="0.4" height="0.4"/><rect x="464.1" y="333.6" width="0.8" height="0.8"/><rect x="474.3" y="336.2" width="0.9" height="0.9"/><rect x="462.4" y="335.8" width="0.7" height="0.7"/><rect x="479.0" y="331.9" width="0.8" height="0.8"/><rect x="468.7" y="337.1" width="0.9" height="0.9"/><rect x="456.7" y="330.4" width="1.0" height="1.0"/><rect x="468.5" y="340.9" width="0.9" height="0.9"/><rect x="477.7" y="338.5" width="0.5" height="0.5"/><rect x="471.8" y="338.7" width="1.0" height="1.0"/><rect x="473.6" y="339.6" width="0.7" height="0.7"/><rect x="472.0" y="337.1" width="0.7" height="0.7"/><rect x="456.2" y="336.1" width="1.0" height="1.0"/><rect x="473.7" y="336.2" width="0.7" height="0.7"/><rect x="460.8" y="342.8" width="1.2" height="1.2"/><rect x="472.5" y="339.5" width="0.5" height="0.5"/><rect x="470.8" y="341.4" width="0.9" height="0.9"/><rect x="469.9" y="338.3" width="0.7" height="0.7"/><rect x="463.8" y="340.8" width="1.2" height="1.2"/><rect x="466.9" y="334.6" width="0.9" height="0.9"/><rect x="469.0" y="337.1" width="1.1" height="1.1"/><rect x="472.7" y="332.0" width="1.0" height="1.0"/><rect x="464.5" y="339.9" width="0.4" height="0.4"/><rect x="468.3" y="337.2" width="0.4" height="0.4"/><rect x="471.1" y="339.7" width="0.6" height="0.6"/><rect x="470.1" y="338.0" width="0.5" height="0.5"/><rect x="475.3" y="339.7" width="0.4" height="0.4"/></g><g fill="#1a1a1a" opacity="0.7"><rect x="471.8" y="346.6" width="0.5" height="0.5"/><rect x="463.9" y="353.2" width="0.7" height="0.7"/><rect x="475.1" y="354.7" width="1.2" height="1.2"/><rect x="455.0" y="350.9" width="0.4" height="0.4"/><rect x="469.9" y="351.9" width="0.6" height="0.6"/><rect x="466.3" y="348.2" width="0.4" height="0.4"/><rect x="473.3" y="348.7" width="0.5" height="0.5"/><rect x="462.2" y="349.8" width="0.8" height="0.8"/><rect x="479.8" y="349.1" width="0.9" height="0.9"/><rect x="463.5" y="353.3" width="0.5" height="0.5"/><rect x="465.4" y="345.7" width="1.0" height="1.0"/><rect x="461.3" y="352.2" width="1.0" height="1.0"/><rect x="479.6" y="349.4" width="1.0" height="1.0"/><rect x="469.5" y="344.8" width="0.5" height="0.5"/><rect x="456.5" y="349.6" width="0.4" height="0.4"/><rect x="470.4" y="350.5" width="0.6" height="0.6"/><rect x="456.9" y="341.8" width="0.7" height="0.7"/><rect x="486.0" y="346.0" width="1.2" height="1.2"/><rect x="460.3" y="351.9" width="0.5" height="0.5"/><rect x="465.8" y="352.2" width="0.9" height="0.9"/><rect x="476.4" y="346.1" width="0.8" height="0.8"/><rect x="455.8" y="344.9" width="0.4" height="0.4"/><rect x="454.7" y="343.5" width="1.0" height="1.0"/><rect x="464.0" y="346.0" width="0.5" height="0.5"/><rect x="465.8" y="346.9" width="1.0" height="1.0"/><rect x="471.9" y="349.4" width="0.7" height="0.7"/><rect x="476.1" y="348.2" width="0.5" height="0.5"/><rect x="467.2" y="351.4" width="1.1" height="1.1"/><rect x="465.6" y="348.2" width="1.1" height="1.1"/><rect x="475.6" y="349.4" width="0.6" height="0.6"/><rect x="460.0" y="349.4" width="0.4" height="0.4"/><rect x="475.4" y="349.1" width="0.8" height="0.8"/><rect x="471.8" y="348.5" width="1.1" height="1.1"/><rect x="466.5" y="347.9" width="0.6" height="0.6"/><rect x="462.4" y="352.5" width="0.8" height="0.8"/><rect x="463.5" y="353.6" width="0.5" height="0.5"/><rect x="470.3" y="348.2" width="0.7" height="0.7"/><rect x="449.0" y="346.2" width="0.7" height="0.7"/><rect x="472.2" y="348.0" width="0.8" height="0.8"/><rect x="462.5" y="349.9" width="0.7" height="0.7"/><rect x="464.3" y="350.3" width="1.0" height="1.0"/><rect x="468.2" y="353.5" width="1.0" height="1.0"/><rect x="457.3" y="348.9" width="0.8" height="0.8"/><rect x="450.8" y="347.9" width="0.4" height="0.4"/><rect x="458.4" y="349.0" width="0.6" height="0.6"/><rect x="465.3" y="345.9" width="0.8" height="0.8"/><rect x="465.1" y="342.3" width="0.7" height="0.7"/><rect x="456.8" y="347.3" width="0.8" height="0.8"/><rect x="460.9" y="346.4" width="0.8" height="0.8"/><rect x="445.1" y="351.1" width="0.9" height="0.9"/></g><g fill="#1a1a1a" opacity="0.7"><rect x="569.7" y="340.0" width="0.6" height="0.6"/><rect x="552.0" y="344.7" width="1.1" height="1.1"/><rect x="563.5" y="352.3" width="0.7" height="0.7"/><rect x="565.0" y="352.0" width="0.4" height="0.4"/><rect x="558.2" y="340.8" width="1.1" height="1.1"/><rect x="566.0" y="357.9" width="0.9" height="0.9"/><rect x="567.8" y="359.7" width="1.2" height="1.2"/><rect x="564.1" y="364.5" width="0.7" height="0.7"/><rect x="548.4" y="351.5" width="1.1" height="1.1"/><rect x="564.5" y="355.4" width="0.8" height="0.8"/><rect x="560.4" y="353.4" width="0.6" height="0.6"/><rect x="561.8" y="348.8" width="0.8" height="0.8"/><rect x="561.2" y="350.4" width="0.6" height="0.6"/><rect x="558.2" y="345.0" width="0.4" height="0.4"/><rect x="569.9" y="349.0" width="1.2" height="1.2"/><rect x="564.8" y="352.9" width="0.4" height="0.4"/><rect x="562.6" y="345.3" width="0.5" height="0.5"/><rect x="553.3" y="356.2" width="1.0" height="1.0"/><rect x="561.9" y="353.4" width="1.1" height="1.1"/><rect x="555.7" y="346.0" width="0.4" height="0.4"/><rect x="568.4" y="353.2" width="0.7" height="0.7"/><rect x="571.5" y="356.2" width="0.9" height="0.9"/><rect x="562.6" y="347.6" width="1.1" height="1.1"/><rect x="570.2" y="354.9" width="0.7" height="0.7"/><rect x="559.0" y="356.5" width="1.1" height="1.1"/><rect x="561.7" y="353.1" width="0.8" height="0.8"/><rect x="562.2" y="352.9" width="0.5" height="0.5"/><rect x="564.9" y="351.3" width="0.6" height="0.6"/><rect x="559.4" y="359.5" width="0.6" height="0.6"/><rect x="559.2" y="350.0" width="0.6" height="0.6"/><rect x="565.4" y="350.5" width="0.4" height="0.4"/><rect x="561.4" y="342.4" width="0.5" height="0.5"/><rect x="551.6" y="352.2" width="0.4" height="0.4"/><rect x="564.0" y="344.2" width="0.8" height="0.8"/><rect x="564.3" y="344.8" width="0.8" height="0.8"/><rect x="557.1" y="334.2" width="0.6" height="0.6"/><rect x="565.5" y="341.8" width="0.9" height="0.9"/><rect x="558.6" y="353.1" width="0.4" height="0.4"/><rect x="563.2" y="351.7" width="1.0" height="1.0"/><rect x="561.9" y="353.6" width="0.4" height="0.4"/><rect x="566.9" y="339.8" width="0.9" height="0.9"/><rect x="561.3" y="354.4" width="0.6" height="0.6"/><rect x="559.5" y="350.9" width="0.7" height="0.7"/><rect x="561.0" y="365.3" width="1.2" height="1.2"/><rect x="558.8" y="348.7" width="1.2" height="1.2"/><rect x="560.5" y="355.2" width="0.4" height="0.4"/><rect x="558.2" y="354.6" width="0.8" height="0.8"/><rect x="563.6" y="356.8" width="0.4" height="0.4"/><rect x="561.8" y="352.6" width="0.7" height="0.7"/><rect x="562.9" y="350.3" width="0.6" height="0.6"/><rect x="562.6" y="357.9" width="0.8" height="0.8"/><rect x="562.0" y="341.2" width="1.0" height="1.0"/><rect x="565.2" y="345.9" width="0.6" height="0.6"/><rect x="564.5" y="349.7" width="1.0" height="1.0"/><rect x="561.2" y="348.6" width="1.1" height="1.1"/><rect x="566.9" y="344.7" width="1.0" height="1.0"/><rect x="562.9" y="347.0" width="0.8" height="0.8"/><rect x="553.5" y="349.7" width="1.0" height="1.0"/><rect x="564.8" y="343.0" width="1.1" height="1.1"/><rect x="559.2" y="341.6" width="0.5" height="0.5"/></g><g fill="#1a1a1a" opacity="0.6"><rect x="586.6" y="352.3" width="0.7" height="0.7"/><rect x="591.5" y="354.9" width="0.8" height="0.8"/><rect x="579.1" y="349.5" width="0.9" height="0.9"/><rect x="583.6" y="352.0" width="1.0" height="1.0"/><rect x="583.9" y="349.0" width="0.8" height="0.8"/><rect x="583.0" y="351.2" width="1.0" height="1.0"/><rect x="584.0" y="353.0" width="0.6" height="0.6"/><rect x="583.6" y="350.3" width="1.0" height="1.0"/><rect x="589.8" y="351.6" width="0.7" height="0.7"/><rect x="576.5" y="352.5" width="1.0" height="1.0"/><rect x="578.7" y="349.6" width="0.4" height="0.4"/><rect x="586.3" y="353.5" width="1.0" height="1.0"/><rect x="581.8" y="355.1" width="0.4" height="0.4"/><rect x="587.7" y="352.7" width="0.9" height="0.9"/><rect x="581.3" y="348.5" width="0.6" height="0.6"/><rect x="578.4" y="351.7" width="0.7" height="0.7"/><rect x="591.8" y="355.6" width="0.5" height="0.5"/><rect x="595.6" y="351.2" width="0.4" height="0.4"/><rect x="575.0" y="353.2" width="1.2" height="1.2"/><rect x="580.2" y="352.6" width="0.5" height="0.5"/><rect x="587.2" y="351.4" width="0.8" height="0.8"/><rect x="587.8" y="354.4" width="1.2" height="1.2"/><rect x="590.2" y="355.4" width="0.8" height="0.8"/><rect x="589.9" y="349.5" width="0.5" height="0.5"/><rect x="588.6" y="350.3" width="0.4" height="0.4"/><rect x="589.8" y="352.1" width="0.7" height="0.7"/><rect x="583.1" y="353.3" width="0.6" height="0.6"/><rect x="580.1" y="356.4" width="0.4" height="0.4"/><rect x="584.0" y="347.2" width="0.5" height="0.5"/><rect x="591.1" y="350.2" width="1.1" height="1.1"/></g><g fill="#1a1a1a" opacity="0.8"><rect x="491.0" y="373.7" width="0.7" height="0.7"/><rect x="497.3" y="370.0" width="0.7" height="0.7"/><rect x="489.1" y="371.4" width="0.4" height="0.4"/><rect x="498.1" y="374.5" width="0.6" height="0.6"/><rect x="494.8" y="368.8" width="0.6" height="0.6"/><rect x="489.4" y="369.8" width="0.7" height="0.7"/><rect x="500.0" y="367.7" width="1.0" height="1.0"/><rect x="486.0" y="363.5" width="1.1" height="1.1"/><rect x="485.9" y="368.1" width="0.4" height="0.4"/><rect x="491.5" y="365.6" width="1.0" height="1.0"/><rect x="490.0" y="367.4" width="0.4" height="0.4"/><rect x="493.9" y="369.1" width="0.8" height="0.8"/><rect x="490.1" y="372.8" width="1.0" height="1.0"/><rect x="495.1" y="369.5" width="0.9" height="0.9"/><rect x="490.4" y="374.8" width="0.7" height="0.7"/><rect x="493.2" y="372.1" width="0.5" height="0.5"/><rect x="495.9" y="367.4" width="0.5" height="0.5"/><rect x="503.2" y="362.5" width="0.7" height="0.7"/><rect x="493.7" y="372.0" width="0.4" height="0.4"/><rect x="491.0" y="371.5" width="0.6" height="0.6"/><rect x="491.7" y="375.2" width="1.1" height="1.1"/><rect x="492.0" y="365.9" width="0.7" height="0.7"/><rect x="488.2" y="369.4" width="0.6" height="0.6"/><rect x="495.0" y="371.2" width="1.2" height="1.2"/><rect x="495.3" y="373.4" width="0.9" height="0.9"/><rect x="493.8" y="367.9" width="0.6" height="0.6"/><rect x="492.0" y="374.0" width="0.7" height="0.7"/><rect x="499.5" y="367.8" width="1.1" height="1.1"/><rect x="493.0" y="370.1" width="1.0" height="1.0"/><rect x="495.6" y="367.2" width="0.8" height="0.8"/></g><g fill="#1a1a1a" opacity="0.6"><rect x="519.9" y="480.0" width="0.9" height="0.9"/><rect x="517.0" y="458.1" width="0.9" height="0.9"/><rect x="490.1" y="486.0" width="0.4" height="0.4"/><rect x="445.0" y="477.3" width="0.9" height="0.9"/><rect x="482.3" y="462.2" width="0.8" height="0.8"/><rect x="453.4" y="484.2" width="0.4" height="0.4"/><rect x="494.4" y="471.1" width="0.9" height="0.9"/><rect x="474.4" y="471.6" width="0.4" height="0.4"/><rect x="489.5" y="497.8" width="0.7" height="0.7"/><rect x="498.7" y="483.1" width="0.6" height="0.6"/><rect x="464.2" y="473.8" width="0.5" height="0.5"/><rect x="486.5" y="478.9" width="0.5" height="0.5"/><rect x="416.5" y="487.7" width="0.7" height="0.7"/><rect x="515.4" y="470.5" width="0.5" height="0.5"/><rect x="491.4" y="511.8" width="0.7" height="0.7"/><rect x="487.8" y="482.5" width="0.6" height="0.6"/><rect x="475.7" y="468.4" width="0.5" height="0.5"/><rect x="456.1" y="455.3" width="0.5" height="0.5"/><rect x="516.6" y="482.4" width="0.6" height="0.6"/><rect x="481.8" y="472.4" width="0.8" height="0.8"/><rect x="487.6" y="465.2" width="0.5" height="0.5"/><rect x="515.5" y="478.0" width="0.8" height="0.8"/><rect x="492.6" y="488.8" width="0.8" height="0.8"/><rect x="469.4" y="509.6" width="0.6" height="0.6"/><rect x="498.2" y="488.2" width="0.6" height="0.6"/><rect x="452.9" y="453.7" width="0.4" height="0.4"/><rect x="473.7" y="485.4" width="0.9" height="0.9"/><rect x="496.1" y="483.2" width="0.4" height="0.4"/><rect x="439.7" y="496.6" width="0.8" height="0.8"/><rect x="478.7" y="436.9" width="0.9" height="0.9"/><rect x="480.8" y="487.0" width="0.9" height="0.9"/><rect x="489.8" y="476.8" width="0.7" height="0.7"/><rect x="469.0" y="488.4" width="0.5" height="0.5"/><rect x="491.1" y="480.8" width="0.5" height="0.5"/><rect x="445.4" y="505.1" width="0.4" height="0.4"/><rect x="509.9" y="478.1" width="0.5" height="0.5"/><rect x="514.2" y="459.1" width="0.6" height="0.6"/><rect x="522.4" y="484.3" width="0.6" height="0.6"/><rect x="507.2" y="476.0" width="0.6" height="0.6"/><rect x="495.9" y="478.1" width="0.6" height="0.6"/><rect x="509.4" y="460.3" width="0.4" height="0.4"/><rect x="500.5" y="481.0" width="0.9" height="0.9"/><rect x="487.8" y="500.7" width="0.8" height="0.8"/><rect x="477.3" y="488.4" width="0.9" height="0.9"/><rect x="472.6" y="473.5" width="0.7" height="0.7"/><rect x="480.2" y="489.2" width="0.4" height="0.4"/><rect x="492.4" y="452.2" width="0.7" height="0.7"/><rect x="496.2" y="479.0" width="0.5" height="0.5"/><rect x="415.7" y="484.9" width="0.9" height="0.9"/><rect x="472.7" y="486.2" width="0.6" height="0.6"/><rect x="421.2" y="481.2" width="0.5" height="0.5"/><rect x="505.9" y="460.6" width="0.8" height="0.8"/><rect x="495.9" y="463.1" width="0.5" height="0.5"/><rect x="478.0" y="490.7" width="0.8" height="0.8"/><rect x="507.5" y="483.9" width="0.8" height="0.8"/><rect x="490.2" y="484.6" width="0.4" height="0.4"/><rect x="464.8" y="476.4" width="0.9" height="0.9"/><rect x="556.3" y="455.2" width="0.5" height="0.5"/><rect x="501.7" y="482.8" width="0.6" height="0.6"/><rect x="481.8" y="466.8" width="0.5" height="0.5"/><rect x="453.8" y="488.7" width="0.7" height="0.7"/><rect x="489.3" y="455.8" width="0.7" height="0.7"/><rect x="531.6" y="496.5" width="0.5" height="0.5"/><rect x="463.5" y="475.1" width="0.8" height="0.8"/><rect x="497.1" y="488.9" width="0.5" height="0.5"/><rect x="525.6" y="501.3" width="0.7" height="0.7"/><rect x="476.1" y="491.1" width="0.9" height="0.9"/><rect x="468.3" y="479.6" width="0.8" height="0.8"/><rect x="437.5" y="448.5" width="0.4" height="0.4"/><rect x="435.2" y="483.7" width="0.8" height="0.8"/><rect x="497.4" y="478.2" width="0.5" height="0.5"/><rect x="504.2" y="485.5" width="0.9" height="0.9"/><rect x="430.0" y="465.6" width="0.6" height="0.6"/><rect x="511.8" y="469.8" width="0.5" height="0.5"/><rect x="502.6" y="450.3" width="0.4" height="0.4"/><rect x="455.7" y="470.1" width="0.5" height="0.5"/><rect x="478.8" y="485.1" width="0.5" height="0.5"/><rect x="488.7" y="496.9" width="0.7" height="0.7"/><rect x="491.3" y="481.8" width="0.5" height="0.5"/><rect x="481.6" y="472.8" width="0.5" height="0.5"/><rect x="505.4" y="501.3" width="0.7" height="0.7"/><rect x="502.8" y="482.2" width="0.6" height="0.6"/><rect x="449.3" y="474.5" width="0.4" height="0.4"/><rect x="513.9" y="496.5" width="0.6" height="0.6"/><rect x="484.7" y="490.5" width="0.9" height="0.9"/><rect x="475.2" y="494.9" width="0.5" height="0.5"/><rect x="438.1" y="492.5" width="0.9" height="0.9"/><rect x="477.0" y="486.3" width="0.8" height="0.8"/><rect x="490.9" y="481.3" width="0.8" height="0.8"/><rect x="440.7" y="490.7" width="0.6" height="0.6"/><rect x="514.7" y="470.7" width="0.4" height="0.4"/><rect x="527.8" y="481.5" width="0.7" height="0.7"/><rect x="500.9" y="477.1" width="0.7" height="0.7"/><rect x="465.5" y="490.7" width="0.4" height="0.4"/><rect x="482.4" y="494.8" width="0.9" height="0.9"/><rect x="517.0" y="489.2" width="0.8" height="0.8"/><rect x="509.5" y="478.3" width="0.4" height="0.4"/><rect x="566.6" y="468.1" width="0.6" height="0.6"/><rect x="554.7" y="489.4" width="0.6" height="0.6"/><rect x="524.4" y="470.2" width="0.8" height="0.8"/><rect x="518.1" y="498.5" width="0.5" height="0.5"/><rect x="442.1" y="493.7" width="0.8" height="0.8"/><rect x="498.6" y="488.0" width="0.6" height="0.6"/><rect x="460.7" y="478.6" width="0.4" height="0.4"/><rect x="490.9" y="500.1" width="0.8" height="0.8"/><rect x="527.3" y="484.1" width="0.8" height="0.8"/><rect x="545.6" y="485.7" width="0.4" height="0.4"/><rect x="459.3" y="470.8" width="0.7" height="0.7"/><rect x="479.2" y="492.2" width="0.7" height="0.7"/><rect x="450.7" y="488.2" width="0.6" height="0.6"/><rect x="484.0" y="481.0" width="0.7" height="0.7"/><rect x="468.1" y="480.6" width="0.8" height="0.8"/><rect x="496.2" y="466.4" width="0.4" height="0.4"/><rect x="475.9" y="481.0" width="0.4" height="0.4"/><rect x="478.1" y="482.3" width="0.6" height="0.6"/><rect x="481.4" y="479.8" width="0.7" height="0.7"/><rect x="532.4" y="490.0" width="0.8" height="0.8"/><rect x="480.0" y="479.7" width="0.6" height="0.6"/><rect x="437.0" y="501.3" width="0.4" height="0.4"/><rect x="552.3" y="447.4" width="0.8" height="0.8"/><rect x="497.8" y="472.5" width="0.9" height="0.9"/><rect x="414.9" y="481.6" width="0.9" height="0.9"/><rect x="516.9" y="499.0" width="0.9" height="0.9"/><rect x="515.6" y="484.6" width="0.8" height="0.8"/><rect x="524.7" y="502.4" width="0.5" height="0.5"/><rect x="496.7" y="473.6" width="0.6" height="0.6"/><rect x="508.0" y="475.9" width="0.5" height="0.5"/><rect x="463.7" y="479.6" width="0.4" height="0.4"/><rect x="497.4" y="486.7" width="0.9" height="0.9"/><rect x="462.7" y="456.0" width="0.4" height="0.4"/><rect x="493.2" y="474.0" width="0.6" height="0.6"/><rect x="471.4" y="471.1" width="0.8" height="0.8"/><rect x="452.8" y="474.4" width="0.8" height="0.8"/><rect x="564.8" y="504.0" width="0.7" height="0.7"/><rect x="447.8" y="493.8" width="0.5" height="0.5"/><rect x="529.3" y="479.0" width="0.5" height="0.5"/><rect x="493.0" y="466.5" width="0.4" height="0.4"/><rect x="489.6" y="476.1" width="0.8" height="0.8"/><rect x="489.0" y="497.8" width="0.9" height="0.9"/><rect x="452.0" y="470.5" width="0.5" height="0.5"/><rect x="497.9" y="480.0" width="0.4" height="0.4"/><rect x="466.2" y="471.1" width="0.6" height="0.6"/><rect x="502.6" y="475.9" width="0.5" height="0.5"/><rect x="486.4" y="477.8" width="0.4" height="0.4"/><rect x="481.3" y="484.7" width="0.5" height="0.5"/><rect x="496.4" y="496.3" width="0.7" height="0.7"/><rect x="501.9" y="496.8" width="0.6" height="0.6"/><rect x="536.7" y="502.0" width="0.5" height="0.5"/><rect x="498.0" y="484.5" width="0.7" height="0.7"/><rect x="526.2" y="464.2" width="0.6" height="0.6"/><rect x="489.6" y="481.9" width="0.7" height="0.7"/><rect x="464.2" y="475.6" width="0.7" height="0.7"/><rect x="423.8" y="490.2" width="0.8" height="0.8"/><rect x="490.6" y="507.0" width="0.4" height="0.4"/><rect x="460.0" y="477.5" width="0.5" height="0.5"/><rect x="538.7" y="487.8" width="0.4" height="0.4"/><rect x="422.3" y="470.6" width="0.4" height="0.4"/><rect x="502.8" y="496.3" width="0.6" height="0.6"/><rect x="455.4" y="462.2" width="0.4" height="0.4"/><rect x="480.8" y="489.8" width="0.4" height="0.4"/><rect x="530.3" y="466.0" width="0.7" height="0.7"/><rect x="547.8" y="481.0" width="0.8" height="0.8"/><rect x="441.8" y="484.5" width="0.6" height="0.6"/><rect x="492.1" y="485.8" width="0.5" height="0.5"/><rect x="516.3" y="482.7" width="0.8" height="0.8"/><rect x="470.4" y="457.3" width="0.7" height="0.7"/><rect x="486.2" y="495.8" width="0.6" height="0.6"/><rect x="498.7" y="465.2" width="0.5" height="0.5"/><rect x="441.2" y="454.8" width="0.5" height="0.5"/><rect x="493.8" y="478.5" width="0.5" height="0.5"/><rect x="494.3" y="500.6" width="0.9" height="0.9"/><rect x="489.4" y="468.9" width="0.8" height="0.8"/><rect x="479.5" y="488.1" width="0.8" height="0.8"/><rect x="458.6" y="465.9" width="0.7" height="0.7"/><rect x="523.5" y="478.1" width="0.8" height="0.8"/><rect x="470.9" y="456.6" width="0.6" height="0.6"/><rect x="483.8" y="464.0" width="0.5" height="0.5"/><rect x="499.9" y="497.0" width="0.4" height="0.4"/><rect x="504.2" y="476.3" width="0.4" height="0.4"/><rect x="544.1" y="497.9" width="0.5" height="0.5"/></g><g fill="#1a1a1a" opacity="0.6"><rect x="601.9" y="472.3" width="0.4" height="0.4"/><rect x="593.7" y="453.4" width="0.7" height="0.7"/><rect x="599.6" y="465.4" width="0.7" height="0.7"/><rect x="584.9" y="487.4" width="0.8" height="0.8"/><rect x="603.6" y="467.1" width="0.8" height="0.8"/><rect x="625.8" y="454.6" width="0.4" height="0.4"/><rect x="601.7" y="475.9" width="0.4" height="0.4"/><rect x="613.2" y="451.3" width="0.7" height="0.7"/><rect x="608.0" y="454.3" width="0.5" height="0.5"/><rect x="604.6" y="473.3" width="0.8" height="0.8"/><rect x="603.1" y="480.5" width="0.6" height="0.6"/><rect x="609.5" y="471.3" width="0.5" height="0.5"/><rect x="597.4" y="458.3" width="0.5" height="0.5"/><rect x="614.4" y="466.7" width="0.8" height="0.8"/><rect x="597.7" y="467.9" width="0.6" height="0.6"/><rect x="580.2" y="478.4" width="0.5" height="0.5"/><rect x="595.6" y="455.1" width="0.5" height="0.5"/><rect x="603.5" y="465.8" width="0.8" height="0.8"/><rect x="600.3" y="470.6" width="0.5" height="0.5"/><rect x="602.6" y="435.6" width="0.4" height="0.4"/><rect x="585.5" y="470.8" width="0.8" height="0.8"/><rect x="605.8" y="483.4" width="0.5" height="0.5"/><rect x="604.8" y="461.5" width="0.9" height="0.9"/><rect x="598.2" y="478.5" width="0.7" height="0.7"/><rect x="594.0" y="470.1" width="0.7" height="0.7"/><rect x="619.2" y="480.7" width="0.7" height="0.7"/><rect x="604.0" y="452.9" width="0.5" height="0.5"/><rect x="589.8" y="477.3" width="0.8" height="0.8"/><rect x="622.4" y="483.5" width="0.4" height="0.4"/><rect x="602.7" y="479.4" width="0.8" height="0.8"/><rect x="587.8" y="469.9" width="0.8" height="0.8"/><rect x="601.4" y="483.8" width="0.6" height="0.6"/><rect x="600.6" y="449.1" width="0.7" height="0.7"/><rect x="593.6" y="479.1" width="0.4" height="0.4"/><rect x="610.2" y="454.6" width="0.8" height="0.8"/><rect x="606.5" y="481.8" width="0.8" height="0.8"/><rect x="594.3" y="466.9" width="0.6" height="0.6"/><rect x="606.9" y="463.9" width="0.5" height="0.5"/><rect x="593.8" y="488.5" width="0.8" height="0.8"/><rect x="604.1" y="476.0" width="0.5" height="0.5"/><rect x="593.0" y="483.5" width="0.4" height="0.4"/><rect x="596.2" y="477.1" width="0.9" height="0.9"/><rect x="599.2" y="464.3" width="0.9" height="0.9"/><rect x="609.9" y="477.3" width="0.9" height="0.9"/><rect x="605.7" y="450.5" width="0.6" height="0.6"/><rect x="605.9" y="486.8" width="0.4" height="0.4"/><rect x="603.3" y="481.9" width="0.4" height="0.4"/><rect x="582.2" y="483.1" width="0.7" height="0.7"/><rect x="582.3" y="469.9" width="0.6" height="0.6"/><rect x="610.7" y="483.2" width="0.6" height="0.6"/><rect x="598.4" y="442.7" width="0.6" height="0.6"/><rect x="581.4" y="460.7" width="0.6" height="0.6"/><rect x="602.7" y="489.8" width="0.8" height="0.8"/><rect x="602.9" y="450.8" width="0.8" height="0.8"/><rect x="592.3" y="453.8" width="0.6" height="0.6"/><rect x="593.2" y="486.2" width="0.4" height="0.4"/><rect x="580.9" y="480.6" width="0.7" height="0.7"/><rect x="593.5" y="463.1" width="0.6" height="0.6"/><rect x="583.3" y="474.8" width="0.6" height="0.6"/><rect x="586.9" y="444.3" width="0.5" height="0.5"/></g><g fill="#1a1a1a" opacity="0.8"><rect x="525.1" y="487.8" width="0.6" height="0.6"/><rect x="516.5" y="495.9" width="0.4" height="0.4"/><rect x="527.1" y="494.2" width="0.9" height="0.9"/><rect x="535.6" y="492.8" width="0.4" height="0.4"/><rect x="524.4" y="492.2" width="0.8" height="0.8"/><rect x="522.9" y="494.5" width="0.9" height="0.9"/><rect x="524.9" y="494.3" width="1.0" height="1.0"/><rect x="531.9" y="502.4" width="0.6" height="0.6"/><rect x="530.2" y="492.5" width="1.0" height="1.0"/><rect x="528.9" y="496.3" width="0.5" height="0.5"/><rect x="529.3" y="495.5" width="0.6" height="0.6"/><rect x="523.2" y="498.7" width="0.6" height="0.6"/><rect x="529.7" y="498.5" width="0.8" height="0.8"/><rect x="535.7" y="492.7" width="0.5" height="0.5"/><rect x="531.6" y="490.3" width="0.5" height="0.5"/><rect x="536.0" y="501.3" width="0.9" height="0.9"/><rect x="526.3" y="490.8" width="0.7" height="0.7"/><rect x="531.9" y="507.7" width="0.6" height="0.6"/><rect x="524.1" y="487.9" width="0.9" height="0.9"/><rect x="525.9" y="495.8" width="0.7" height="0.7"/><rect x="536.7" y="501.7" width="0.6" height="0.6"/><rect x="532.3" y="491.8" width="0.6" height="0.6"/><rect x="529.9" y="500.3" width="0.5" height="0.5"/><rect x="538.0" y="495.1" width="0.5" height="0.5"/><rect x="530.1" y="499.2" width="0.7" height="0.7"/><rect x="523.6" y="498.1" width="0.8" height="0.8"/><rect x="522.5" y="503.7" width="0.9" height="0.9"/><rect x="538.8" y="498.3" width="0.9" height="0.9"/><rect x="530.6" y="492.3" width="0.9" height="0.9"/><rect x="529.4" y="494.4" width="0.4" height="0.4"/><rect x="537.0" y="492.8" width="0.5" height="0.5"/><rect x="532.2" y="496.7" width="0.5" height="0.5"/><rect x="530.8" y="490.5" width="0.4" height="0.4"/><rect x="537.3" y="490.0" width="0.5" height="0.5"/><rect x="535.3" y="490.7" width="0.9" height="0.9"/><rect x="524.8" y="485.8" width="0.9" height="0.9"/><rect x="531.8" y="492.2" width="0.8" height="0.8"/><rect x="521.9" y="493.4" width="0.6" height="0.6"/><rect x="534.7" y="490.7" width="0.5" height="0.5"/><rect x="530.3" y="497.7" width="0.7" height="0.7"/></g><g fill="#1a1a1a" opacity="0.6"><rect x="626.2" y="593.5" width="0.5" height="0.5"/><rect x="617.3" y="586.3" width="0.8" height="0.8"/><rect x="622.3" y="583.2" width="1.1" height="1.1"/><rect x="617.0" y="590.4" width="0.9" height="0.9"/><rect x="624.1" y="567.8" width="0.7" height="0.7"/><rect x="623.5" y="583.0" width="0.9" height="0.9"/><rect x="621.4" y="581.2" width="0.9" height="0.9"/><rect x="618.2" y="540.7" width="0.6" height="0.6"/><rect x="626.8" y="582.1" width="0.8" height="0.8"/><rect x="622.8" y="581.7" width="1.0" height="1.0"/><rect x="619.4" y="571.5" width="1.1" height="1.1"/><rect x="619.0" y="602.8" width="0.8" height="0.8"/><rect x="622.4" y="570.7" width="0.7" height="0.7"/><rect x="617.5" y="597.5" width="1.1" height="1.1"/><rect x="620.0" y="623.0" width="0.7" height="0.7"/><rect x="618.8" y="584.6" width="0.8" height="0.8"/><rect x="627.8" y="580.2" width="1.0" height="1.0"/><rect x="620.3" y="601.0" width="0.6" height="0.6"/><rect x="617.1" y="569.6" width="1.0" height="1.0"/><rect x="628.2" y="593.4" width="1.1" height="1.1"/><rect x="620.8" y="583.1" width="0.6" height="0.6"/><rect x="624.6" y="585.5" width="1.1" height="1.1"/><rect x="617.5" y="565.6" width="1.0" height="1.0"/><rect x="626.6" y="569.5" width="0.9" height="0.9"/><rect x="617.7" y="561.8" width="0.9" height="0.9"/><rect x="620.8" y="571.8" width="0.9" height="0.9"/><rect x="615.5" y="594.3" width="0.4" height="0.4"/><rect x="622.5" y="590.2" width="1.0" height="1.0"/><rect x="627.0" y="569.2" width="0.7" height="0.7"/><rect x="625.1" y="551.9" width="0.8" height="0.8"/><rect x="621.8" y="602.8" width="0.7" height="0.7"/><rect x="620.2" y="605.3" width="0.9" height="0.9"/><rect x="623.2" y="582.2" width="0.8" height="0.8"/><rect x="624.0" y="587.6" width="1.0" height="1.0"/><rect x="614.0" y="563.6" width="0.7" height="0.7"/><rect x="625.9" y="586.8" width="0.9" height="0.9"/><rect x="632.4" y="562.5" width="0.8" height="0.8"/><rect x="620.4" y="590.1" width="0.9" height="0.9"/><rect x="622.5" y="596.7" width="0.4" height="0.4"/><rect x="628.1" y="586.0" width="0.5" height="0.5"/><rect x="623.7" y="583.1" width="1.1" height="1.1"/><rect x="622.5" y="587.9" width="1.0" height="1.0"/><rect x="622.3" y="619.1" width="0.5" height="0.5"/><rect x="628.6" y="596.2" width="1.0" height="1.0"/><rect x="626.0" y="558.2" width="0.4" height="0.4"/><rect x="617.7" y="561.1" width="0.7" height="0.7"/><rect x="624.8" y="578.4" width="1.2" height="1.2"/><rect x="621.9" y="581.9" width="0.4" height="0.4"/><rect x="617.7" y="553.6" width="0.4" height="0.4"/><rect x="619.6" y="616.5" width="0.5" height="0.5"/><rect x="625.0" y="566.4" width="0.4" height="0.4"/><rect x="618.5" y="605.3" width="0.7" height="0.7"/><rect x="621.0" y="574.5" width="1.0" height="1.0"/><rect x="618.2" y="607.9" width="0.9" height="0.9"/><rect x="618.6" y="595.2" width="1.0" height="1.0"/><rect x="628.6" y="572.5" width="0.8" height="0.8"/><rect x="621.6" y="592.2" width="1.2" height="1.2"/><rect x="619.8" y="547.3" width="0.6" height="0.6"/><rect x="613.3" y="549.3" width="1.1" height="1.1"/><rect x="619.2" y="574.3" width="0.7" height="0.7"/><rect x="625.0" y="571.8" width="0.9" height="0.9"/><rect x="615.2" y="558.3" width="1.0" height="1.0"/><rect x="622.0" y="586.2" width="0.6" height="0.6"/><rect x="617.3" y="598.1" width="1.0" height="1.0"/><rect x="622.9" y="581.0" width="1.1" height="1.1"/><rect x="625.0" y="545.9" width="0.8" height="0.8"/><rect x="620.8" y="625.5" width="1.0" height="1.0"/><rect x="618.5" y="542.4" width="0.6" height="0.6"/><rect x="626.4" y="598.6" width="1.0" height="1.0"/><rect x="624.0" y="618.3" width="1.1" height="1.1"/><rect x="622.5" y="613.6" width="0.9" height="0.9"/><rect x="619.3" y="588.1" width="0.6" height="0.6"/><rect x="622.1" y="547.8" width="0.7" height="0.7"/><rect x="628.2" y="604.9" width="1.0" height="1.0"/><rect x="622.6" y="612.5" width="1.1" height="1.1"/><rect x="625.6" y="568.1" width="0.8" height="0.8"/><rect x="619.8" y="577.8" width="0.5" height="0.5"/><rect x="624.6" y="614.6" width="0.7" height="0.7"/><rect x="618.3" y="576.6" width="0.8" height="0.8"/><rect x="622.7" y="590.1" width="1.2" height="1.2"/><rect x="620.7" y="592.1" width="0.9" height="0.9"/><rect x="622.5" y="573.1" width="0.9" height="0.9"/><rect x="619.3" y="606.0" width="0.4" height="0.4"/><rect x="633.9" y="598.4" width="1.1" height="1.1"/><rect x="616.8" y="587.3" width="0.6" height="0.6"/><rect x="622.8" y="563.2" width="1.2" height="1.2"/><rect x="622.8" y="546.4" width="1.2" height="1.2"/><rect x="622.0" y="590.8" width="0.5" height="0.5"/><rect x="622.7" y="593.0" width="0.4" height="0.4"/><rect x="614.4" y="570.0" width="0.7" height="0.7"/><rect x="630.3" y="570.0" width="0.4" height="0.4"/><rect x="618.7" y="572.8" width="0.5" height="0.5"/><rect x="625.0" y="580.9" width="0.8" height="0.8"/><rect x="615.6" y="544.4" width="0.9" height="0.9"/><rect x="618.6" y="599.3" width="0.5" height="0.5"/><rect x="634.1" y="571.1" width="0.5" height="0.5"/><rect x="625.0" y="588.9" width="0.6" height="0.6"/><rect x="629.1" y="558.9" width="1.1" height="1.1"/><rect x="628.7" y="595.7" width="1.0" height="1.0"/><rect x="615.0" y="536.4" width="0.4" height="0.4"/><rect x="626.1" y="612.8" width="1.1" height="1.1"/><rect x="620.5" y="569.1" width="0.9" height="0.9"/><rect x="622.1" y="575.1" width="0.6" height="0.6"/><rect x="621.9" y="595.8" width="0.8" height="0.8"/><rect x="623.4" y="598.5" width="0.5" height="0.5"/><rect x="621.7" y="582.0" width="1.0" height="1.0"/><rect x="622.4" y="590.4" width="1.1" height="1.1"/><rect x="623.7" y="633.1" width="1.1" height="1.1"/><rect x="623.7" y="577.6" width="0.7" height="0.7"/><rect x="629.5" y="612.6" width="1.1" height="1.1"/></g><g fill="#1a1a1a" opacity="0.8"><rect x="550.4" y="646.8" width="0.6" height="0.6"/><rect x="558.0" y="645.9" width="0.9" height="0.9"/><rect x="557.7" y="652.2" width="0.4" height="0.4"/><rect x="553.3" y="645.1" width="0.5" height="0.5"/><rect x="558.2" y="647.7" width="0.7" height="0.7"/><rect x="557.7" y="652.6" width="1.1" height="1.1"/><rect x="553.2" y="652.1" width="0.8" height="0.8"/><rect x="549.6" y="657.9" width="0.4" height="0.4"/><rect x="557.0" y="649.8" width="1.1" height="1.1"/><rect x="553.0" y="647.6" width="0.8" height="0.8"/><rect x="554.0" y="653.0" width="0.5" height="0.5"/><rect x="542.9" y="659.2" width="1.2" height="1.2"/><rect x="557.4" y="649.2" width="0.6" height="0.6"/><rect x="556.6" y="649.2" width="1.0" height="1.0"/><rect x="550.5" y="660.7" width="0.4" height="0.4"/><rect x="556.9" y="646.6" width="0.5" height="0.5"/><rect x="566.3" y="650.1" width="0.8" height="0.8"/><rect x="557.5" y="653.9" width="1.1" height="1.1"/><rect x="556.5" y="655.1" width="0.5" height="0.5"/><rect x="559.4" y="656.2" width="1.0" height="1.0"/><rect x="555.8" y="651.5" width="0.4" height="0.4"/><rect x="549.6" y="647.1" width="0.6" height="0.6"/><rect x="557.3" y="655.3" width="1.0" height="1.0"/><rect x="558.0" y="645.1" width="0.5" height="0.5"/><rect x="563.9" y="652.6" width="0.7" height="0.7"/><rect x="554.6" y="648.7" width="1.0" height="1.0"/><rect x="549.1" y="656.6" width="1.1" height="1.1"/><rect x="553.9" y="650.0" width="1.1" height="1.1"/><rect x="543.0" y="651.2" width="0.6" height="0.6"/><rect x="559.4" y="656.9" width="0.7" height="0.7"/><rect x="558.0" y="653.3" width="0.9" height="0.9"/><rect x="562.3" y="650.1" width="0.7" height="0.7"/><rect x="552.0" y="649.8" width="1.0" height="1.0"/><rect x="559.9" y="642.7" width="0.6" height="0.6"/><rect x="553.6" y="646.2" width="1.0" height="1.0"/><rect x="566.3" y="653.0" width="1.2" height="1.2"/><rect x="547.8" y="650.2" width="0.8" height="0.8"/><rect x="553.8" y="649.8" width="1.2" height="1.2"/><rect x="555.6" y="652.5" width="0.4" height="0.4"/><rect x="555.0" y="657.4" width="0.4" height="0.4"/><rect x="562.6" y="653.5" width="0.5" height="0.5"/><rect x="563.1" y="650.6" width="0.8" height="0.8"/><rect x="545.8" y="649.1" width="0.4" height="0.4"/><rect x="561.5" y="645.4" width="0.4" height="0.4"/><rect x="560.0" y="653.3" width="0.8" height="0.8"/><rect x="554.4" y="652.0" width="0.7" height="0.7"/><rect x="560.2" y="654.1" width="1.1" height="1.1"/><rect x="559.7" y="654.2" width="1.0" height="1.0"/><rect x="560.8" y="656.4" width="1.1" height="1.1"/><rect x="550.2" y="652.7" width="1.1" height="1.1"/><rect x="549.1" y="649.4" width="1.2" height="1.2"/><rect x="555.9" y="646.4" width="0.6" height="0.6"/><rect x="551.7" y="653.7" width="1.2" height="1.2"/><rect x="559.4" y="641.7" width="1.0" height="1.0"/><rect x="556.1" y="648.9" width="0.8" height="0.8"/><rect x="568.5" y="647.6" width="0.6" height="0.6"/><rect x="547.5" y="652.7" width="0.7" height="0.7"/><rect x="552.8" y="649.7" width="0.7" height="0.7"/><rect x="553.8" y="650.0" width="0.5" height="0.5"/><rect x="565.2" y="648.7" width="1.1" height="1.1"/><rect x="547.7" y="644.6" width="1.1" height="1.1"/><rect x="556.2" y="649.3" width="0.9" height="0.9"/><rect x="554.1" y="656.0" width="0.6" height="0.6"/><rect x="541.8" y="647.6" width="0.9" height="0.9"/><rect x="555.0" y="654.8" width="0.7" height="0.7"/><rect x="559.7" y="649.0" width="0.6" height="0.6"/><rect x="553.2" y="648.4" width="0.9" height="0.9"/><rect x="561.9" y="648.7" width="0.6" height="0.6"/><rect x="547.8" y="651.0" width="0.5" height="0.5"/><rect x="557.3" y="651.5" width="0.6" height="0.6"/><rect x="550.9" y="651.8" width="0.6" height="0.6"/><rect x="561.4" y="652.6" width="1.1" height="1.1"/><rect x="549.0" y="646.7" width="0.9" height="0.9"/><rect x="557.9" y="656.0" width="0.7" height="0.7"/><rect x="547.1" y="648.4" width="0.7" height="0.7"/><rect x="553.3" y="652.8" width="0.5" height="0.5"/><rect x="549.1" y="649.7" width="0.8" height="0.8"/><rect x="560.6" y="650.3" width="1.1" height="1.1"/><rect x="555.6" y="655.1" width="0.8" height="0.8"/><rect x="551.1" y="661.6" width="0.6" height="0.6"/><rect x="555.5" y="647.7" width="0.4" height="0.4"/><rect x="559.5" y="646.9" width="0.4" height="0.4"/><rect x="550.1" y="652.8" width="1.0" height="1.0"/><rect x="558.3" y="651.8" width="1.2" height="1.2"/><rect x="554.8" y="647.7" width="0.6" height="0.6"/><rect x="549.6" y="654.8" width="0.9" height="0.9"/><rect x="561.5" y="644.0" width="0.8" height="0.8"/><rect x="554.3" y="643.4" width="1.0" height="1.0"/><rect x="544.6" y="651.1" width="1.0" height="1.0"/><rect x="557.7" y="648.9" width="1.1" height="1.1"/><rect x="565.2" y="650.2" width="0.8" height="0.8"/><rect x="539.6" y="650.1" width="0.8" height="0.8"/><rect x="545.9" y="653.5" width="1.1" height="1.1"/><rect x="550.4" y="647.6" width="0.7" height="0.7"/><rect x="545.7" y="651.7" width="0.6" height="0.6"/><rect x="549.1" y="653.2" width="0.7" height="0.7"/><rect x="550.4" y="656.3" width="1.1" height="1.1"/><rect x="548.5" y="650.0" width="0.5" height="0.5"/><rect x="553.9" y="652.1" width="0.8" height="0.8"/><rect x="552.8" y="649.2" width="1.1" height="1.1"/><rect x="549.8" y="656.9" width="1.1" height="1.1"/><rect x="558.9" y="649.3" width="0.7" height="0.7"/><rect x="555.7" y="649.7" width="0.4" height="0.4"/><rect x="548.5" y="648.1" width="1.1" height="1.1"/><rect x="556.1" y="645.1" width="1.2" height="1.2"/><rect x="547.8" y="649.5" width="0.9" height="0.9"/><rect x="550.7" y="652.4" width="0.9" height="0.9"/><rect x="546.3" y="657.8" width="0.9" height="0.9"/><rect x="552.3" y="649.7" width="0.7" height="0.7"/><rect x="548.7" y="653.0" width="0.8" height="0.8"/><rect x="566.3" y="642.9" width="0.8" height="0.8"/><rect x="547.2" y="652.1" width="1.2" height="1.2"/><rect x="550.9" y="654.1" width="1.0" height="1.0"/><rect x="557.5" y="653.1" width="1.2" height="1.2"/><rect x="558.3" y="645.7" width="0.4" height="0.4"/><rect x="562.2" y="646.2" width="1.0" height="1.0"/><rect x="567.5" y="649.5" width="0.7" height="0.7"/><rect x="557.8" y="652.8" width="0.8" height="0.8"/><rect x="551.1" y="649.9" width="0.5" height="0.5"/><rect x="549.4" y="646.0" width="0.7" height="0.7"/></g><g fill="#1a1a1a" opacity="0.6"><rect x="503.4" y="613.8" width="0.4" height="0.4"/><rect x="445.1" y="617.7" width="0.5" height="0.5"/><rect x="474.4" y="613.7" width="0.5" height="0.5"/><rect x="489.5" y="609.6" width="0.7" height="0.7"/><rect x="482.7" y="618.4" width="0.7" height="0.7"/><rect x="472.1" y="619.7" width="0.6" height="0.6"/><rect x="501.1" y="613.9" width="0.6" height="0.6"/><rect x="483.4" y="615.6" width="0.8" height="0.8"/><rect x="482.2" y="615.1" width="0.4" height="0.4"/><rect x="438.1" y="613.0" width="0.7" height="0.7"/><rect x="477.5" y="612.7" width="0.4" height="0.4"/><rect x="477.3" y="610.5" width="0.7" height="0.7"/><rect x="467.6" y="615.9" width="0.5" height="0.5"/><rect x="510.1" y="619.1" width="0.7" height="0.7"/><rect x="462.3" y="617.6" width="0.6" height="0.6"/><rect x="514.6" y="616.8" width="0.7" height="0.7"/><rect x="495.8" y="612.9" width="0.7" height="0.7"/><rect x="475.0" y="615.2" width="0.9" height="0.9"/><rect x="485.6" y="611.2" width="0.8" height="0.8"/><rect x="481.8" y="610.9" width="0.7" height="0.7"/><rect x="497.7" y="612.8" width="0.9" height="0.9"/><rect x="475.9" y="618.0" width="0.7" height="0.7"/><rect x="478.1" y="617.4" width="0.8" height="0.8"/><rect x="439.7" y="614.7" width="0.5" height="0.5"/><rect x="483.7" y="617.3" width="0.5" height="0.5"/><rect x="491.3" y="613.4" width="0.7" height="0.7"/><rect x="493.5" y="617.3" width="0.6" height="0.6"/><rect x="469.0" y="614.8" width="0.4" height="0.4"/><rect x="483.5" y="610.7" width="0.5" height="0.5"/><rect x="480.9" y="617.0" width="0.5" height="0.5"/><rect x="503.8" y="615.3" width="0.5" height="0.5"/><rect x="492.4" y="619.2" width="0.4" height="0.4"/><rect x="470.3" y="621.5" width="0.4" height="0.4"/><rect x="439.3" y="616.7" width="0.8" height="0.8"/><rect x="485.1" y="617.1" width="0.7" height="0.7"/><rect x="438.9" y="621.0" width="0.5" height="0.5"/><rect x="497.6" y="612.6" width="0.5" height="0.5"/><rect x="464.9" y="614.6" width="0.7" height="0.7"/><rect x="472.1" y="622.6" width="0.7" height="0.7"/><rect x="464.8" y="616.2" width="0.7" height="0.7"/><rect x="484.5" y="621.9" width="0.4" height="0.4"/><rect x="450.1" y="613.6" width="0.5" height="0.5"/><rect x="477.7" y="610.1" width="0.7" height="0.7"/><rect x="459.3" y="612.6" width="0.6" height="0.6"/><rect x="485.7" y="615.3" width="0.8" height="0.8"/><rect x="462.3" y="619.3" width="0.4" height="0.4"/><rect x="457.5" y="612.6" width="0.6" height="0.6"/><rect x="472.9" y="615.4" width="0.5" height="0.5"/><rect x="476.5" y="616.1" width="0.7" height="0.7"/><rect x="470.9" y="618.0" width="0.8" height="0.8"/><rect x="481.5" y="605.8" width="0.8" height="0.8"/><rect x="485.9" y="616.4" width="0.4" height="0.4"/><rect x="462.4" y="608.7" width="0.5" height="0.5"/><rect x="450.0" y="617.1" width="0.7" height="0.7"/><rect x="475.4" y="621.7" width="0.5" height="0.5"/><rect x="466.3" y="612.2" width="0.4" height="0.4"/><rect x="502.8" y="610.6" width="0.7" height="0.7"/><rect x="480.5" y="614.3" width="0.4" height="0.4"/><rect x="480.4" y="617.2" width="0.6" height="0.6"/><rect x="491.7" y="614.8" width="0.7" height="0.7"/></g><g fill="#1a1a1a" opacity="0.9"><rect x="437.0" y="641.0" width="0.9" height="0.9"/><rect x="426.2" y="586.5" width="0.8" height="0.8"/><rect x="423.9" y="584.3" width="0.4" height="0.4"/><rect x="437.6" y="570.1" width="0.6" height="0.6"/><rect x="448.8" y="614.5" width="0.9" height="0.9"/><rect x="435.9" y="607.8" width="0.5" height="0.5"/><rect x="429.9" y="588.4" width="1.2" height="1.2"/><rect x="428.0" y="593.7" width="1.0" height="1.0"/><rect x="413.7" y="625.6" width="1.1" height="1.1"/><rect x="427.1" y="612.4" width="1.2" height="1.2"/><rect x="405.5" y="626.3" width="1.0" height="1.0"/><rect x="426.5" y="561.7" width="0.9" height="0.9"/><rect x="424.5" y="605.1" width="1.0" height="1.0"/><rect x="416.1" y="614.5" width="1.2" height="1.2"/><rect x="441.0" y="629.8" width="0.4" height="0.4"/><rect x="422.2" y="564.9" width="0.6" height="0.6"/><rect x="400.2" y="586.3" width="1.0" height="1.0"/><rect x="420.0" y="598.5" width="0.4" height="0.4"/><rect x="420.9" y="620.7" width="0.5" height="0.5"/><rect x="425.8" y="614.1" width="1.0" height="1.0"/><rect x="424.1" y="588.8" width="0.6" height="0.6"/><rect x="416.1" y="600.7" width="1.2" height="1.2"/><rect x="422.5" y="617.9" width="1.2" height="1.2"/><rect x="436.9" y="625.0" width="0.7" height="0.7"/><rect x="433.5" y="577.6" width="1.1" height="1.1"/><rect x="435.9" y="631.5" width="0.9" height="0.9"/><rect x="409.8" y="612.1" width="1.1" height="1.1"/><rect x="434.8" y="615.0" width="0.7" height="0.7"/><rect x="429.0" y="610.5" width="0.6" height="0.6"/><rect x="433.6" y="635.3" width="0.8" height="0.8"/><rect x="435.4" y="615.7" width="0.8" height="0.8"/><rect x="423.7" y="613.1" width="0.4" height="0.4"/><rect x="462.2" y="607.6" width="1.1" height="1.1"/><rect x="443.1" y="620.6" width="1.3" height="1.3"/><rect x="423.1" y="598.9" width="0.8" height="0.8"/><rect x="421.5" y="608.7" width="0.9" height="0.9"/><rect x="452.7" y="605.6" width="1.0" height="1.0"/><rect x="410.1" y="566.0" width="1.0" height="1.0"/><rect x="427.9" y="619.5" width="0.5" height="0.5"/><rect x="446.7" y="609.6" width="1.1" height="1.1"/><rect x="426.0" y="616.5" width="1.0" height="1.0"/><rect x="442.2" y="561.5" width="0.5" height="0.5"/><rect x="432.5" y="562.5" width="1.1" height="1.1"/><rect x="424.7" y="615.5" width="1.1" height="1.1"/><rect x="423.5" y="622.1" width="0.9" height="0.9"/><rect x="413.9" y="633.4" width="0.6" height="0.6"/><rect x="441.8" y="610.3" width="0.9" height="0.9"/><rect x="435.3" y="571.8" width="1.2" height="1.2"/><rect x="440.1" y="594.3" width="0.8" height="0.8"/><rect x="433.1" y="618.5" width="0.9" height="0.9"/><rect x="442.7" y="619.2" width="0.5" height="0.5"/><rect x="400.7" y="623.3" width="0.4" height="0.4"/><rect x="439.5" y="608.9" width="0.5" height="0.5"/><rect x="427.9" y="601.4" width="1.1" height="1.1"/><rect x="439.9" y="572.5" width="0.8" height="0.8"/><rect x="424.6" y="634.7" width="0.8" height="0.8"/><rect x="419.2" y="612.5" width="0.8" height="0.8"/><rect x="417.7" y="567.4" width="1.2" height="1.2"/><rect x="432.7" y="618.8" width="0.8" height="0.8"/><rect x="418.6" y="595.1" width="0.5" height="0.5"/><rect x="436.4" y="612.9" width="0.8" height="0.8"/><rect x="451.7" y="594.4" width="1.2" height="1.2"/><rect x="455.7" y="594.0" width="0.9" height="0.9"/><rect x="429.5" y="595.8" width="1.0" height="1.0"/><rect x="420.9" y="591.3" width="0.9" height="0.9"/><rect x="440.0" y="595.6" width="1.0" height="1.0"/><rect x="424.9" y="622.2" width="1.2" height="1.2"/><rect x="435.0" y="605.5" width="1.0" height="1.0"/><rect x="423.6" y="606.0" width="1.0" height="1.0"/><rect x="417.9" y="623.9" width="0.7" height="0.7"/><rect x="414.1" y="597.7" width="0.7" height="0.7"/><rect x="433.2" y="612.1" width="1.2" height="1.2"/><rect x="422.9" y="599.8" width="1.2" height="1.2"/><rect x="427.9" y="612.8" width="0.9" height="0.9"/><rect x="427.9" y="628.5" width="0.9" height="0.9"/><rect x="430.1" y="631.4" width="0.5" height="0.5"/><rect x="413.4" y="600.6" width="0.4" height="0.4"/><rect x="424.4" y="607.7" width="0.8" height="0.8"/><rect x="437.1" y="582.0" width="1.0" height="1.0"/><rect x="428.2" y="592.2" width="1.3" height="1.3"/><rect x="427.1" y="593.0" width="1.1" height="1.1"/><rect x="422.8" y="611.5" width="1.3" height="1.3"/><rect x="410.5" y="588.3" width="0.5" height="0.5"/><rect x="428.6" y="595.5" width="0.6" height="0.6"/><rect x="426.7" y="605.8" width="0.9" height="0.9"/><rect x="430.1" y="621.1" width="1.0" height="1.0"/><rect x="407.4" y="623.7" width="0.9" height="0.9"/><rect x="437.8" y="582.6" width="1.2" height="1.2"/><rect x="432.6" y="593.3" width="1.1" height="1.1"/><rect x="417.9" y="634.4" width="1.0" height="1.0"/><rect x="430.6" y="593.0" width="0.7" height="0.7"/><rect x="425.9" y="549.7" width="1.0" height="1.0"/><rect x="442.4" y="611.1" width="0.4" height="0.4"/><rect x="409.1" y="591.0" width="0.5" height="0.5"/><rect x="442.7" y="588.1" width="0.6" height="0.6"/><rect x="432.2" y="625.4" width="1.1" height="1.1"/><rect x="423.3" y="597.7" width="0.4" height="0.4"/><rect x="443.2" y="628.3" width="0.5" height="0.5"/><rect x="419.4" y="596.9" width="1.0" height="1.0"/><rect x="423.5" y="611.4" width="1.2" height="1.2"/><rect x="411.7" y="595.0" width="1.1" height="1.1"/><rect x="429.7" y="601.8" width="0.7" height="0.7"/><rect x="435.6" y="624.1" width="1.2" height="1.2"/><rect x="428.9" y="597.4" width="0.5" height="0.5"/><rect x="434.9" y="572.8" width="0.7" height="0.7"/><rect x="421.6" y="605.0" width="1.2" height="1.2"/><rect x="410.5" y="630.7" width="0.9" height="0.9"/><rect x="436.7" y="612.0" width="0.6" height="0.6"/><rect x="439.5" y="584.9" width="0.4" height="0.4"/><rect x="433.0" y="621.2" width="0.8" height="0.8"/><rect x="418.4" y="592.9" width="0.7" height="0.7"/><rect x="442.5" y="604.1" width="0.7" height="0.7"/><rect x="440.1" y="606.1" width="1.3" height="1.3"/><rect x="433.9" y="606.5" width="1.0" height="1.0"/><rect x="426.8" y="620.4" width="0.8" height="0.8"/><rect x="426.9" y="631.5" width="0.9" height="0.9"/><rect x="461.0" y="584.7" width="0.4" height="0.4"/><rect x="410.5" y="589.0" width="1.2" height="1.2"/><rect x="430.4" y="572.2" width="1.0" height="1.0"/><rect x="422.2" y="616.6" width="1.1" height="1.1"/><rect x="446.1" y="565.7" width="1.0" height="1.0"/><rect x="421.8" y="638.2" width="1.1" height="1.1"/><rect x="412.4" y="601.3" width="0.7" height="0.7"/><rect x="417.3" y="596.0" width="0.4" height="0.4"/><rect x="422.9" y="619.6" width="1.3" height="1.3"/><rect x="417.5" y="605.4" width="0.6" height="0.6"/><rect x="429.0" y="623.3" width="0.5" height="0.5"/><rect x="450.2" y="605.0" width="0.8" height="0.8"/><rect x="414.6" y="612.6" width="0.6" height="0.6"/><rect x="430.0" y="610.1" width="0.6" height="0.6"/><rect x="421.6" y="636.1" width="0.9" height="0.9"/><rect x="437.3" y="595.3" width="1.2" height="1.2"/><rect x="424.1" y="598.5" width="0.5" height="0.5"/><rect x="399.5" y="571.5" width="0.7" height="0.7"/><rect x="429.8" y="580.0" width="1.2" height="1.2"/><rect x="439.5" y="613.5" width="1.2" height="1.2"/><rect x="426.6" y="619.8" width="0.4" height="0.4"/><rect x="432.4" y="617.9" width="1.0" height="1.0"/><rect x="430.2" y="624.8" width="0.5" height="0.5"/><rect x="410.5" y="576.5" width="1.0" height="1.0"/><rect x="433.9" y="636.8" width="1.3" height="1.3"/><rect x="424.4" y="597.7" width="1.1" height="1.1"/><rect x="435.1" y="588.8" width="0.5" height="0.5"/><rect x="433.2" y="628.3" width="1.2" height="1.2"/><rect x="412.1" y="564.6" width="0.6" height="0.6"/><rect x="419.5" y="635.4" width="1.0" height="1.0"/><rect x="414.3" y="621.6" width="0.7" height="0.7"/><rect x="438.6" y="611.0" width="0.4" height="0.4"/><rect x="421.0" y="588.8" width="0.8" height="0.8"/><rect x="421.1" y="593.2" width="0.8" height="0.8"/><rect x="453.0" y="607.3" width="0.9" height="0.9"/><rect x="431.7" y="602.4" width="0.9" height="0.9"/><rect x="426.4" y="583.6" width="0.4" height="0.4"/><rect x="431.4" y="613.1" width="1.1" height="1.1"/><rect x="445.0" y="624.6" width="0.8" height="0.8"/><rect x="413.8" y="595.9" width="0.9" height="0.9"/><rect x="419.8" y="578.1" width="0.7" height="0.7"/><rect x="427.5" y="586.0" width="1.0" height="1.0"/><rect x="429.6" y="565.1" width="0.6" height="0.6"/><rect x="432.3" y="543.0" width="0.8" height="0.8"/><rect x="425.6" y="629.4" width="1.2" height="1.2"/><rect x="429.0" y="605.2" width="0.8" height="0.8"/><rect x="417.4" y="571.6" width="0.7" height="0.7"/><rect x="435.9" y="602.0" width="1.1" height="1.1"/><rect x="430.2" y="605.8" width="0.5" height="0.5"/><rect x="440.1" y="612.6" width="0.9" height="0.9"/><rect x="438.8" y="650.4" width="0.7" height="0.7"/><rect x="432.1" y="614.1" width="1.1" height="1.1"/><rect x="433.8" y="596.8" width="0.4" height="0.4"/><rect x="429.4" y="586.9" width="1.3" height="1.3"/><rect x="412.4" y="603.2" width="0.7" height="0.7"/><rect x="431.8" y="579.8" width="0.7" height="0.7"/><rect x="432.3" y="597.0" width="1.0" height="1.0"/><rect x="442.5" y="615.7" width="0.7" height="0.7"/><rect x="430.5" y="597.2" width="0.9" height="0.9"/><rect x="407.2" y="629.5" width="1.2" height="1.2"/><rect x="422.5" y="591.8" width="0.6" height="0.6"/><rect x="427.1" y="626.4" width="0.6" height="0.6"/><rect x="433.4" y="638.5" width="1.0" height="1.0"/><rect x="417.4" y="670.5" width="0.6" height="0.6"/><rect x="422.2" y="597.6" width="1.2" height="1.2"/><rect x="433.9" y="590.3" width="1.1" height="1.1"/><rect x="432.0" y="586.9" width="0.7" height="0.7"/><rect x="404.9" y="607.2" width="0.5" height="0.5"/><rect x="421.9" y="575.9" width="0.8" height="0.8"/><rect x="408.0" y="581.2" width="0.5" height="0.5"/><rect x="435.7" y="589.1" width="1.1" height="1.1"/><rect x="432.6" y="592.4" width="1.2" height="1.2"/><rect x="437.2" y="602.4" width="0.4" height="0.4"/><rect x="450.8" y="641.4" width="0.4" height="0.4"/><rect x="433.3" y="596.4" width="1.0" height="1.0"/><rect x="433.5" y="610.7" width="1.0" height="1.0"/><rect x="436.5" y="613.8" width="1.2" height="1.2"/><rect x="423.2" y="558.5" width="1.3" height="1.3"/><rect x="435.9" y="606.3" width="1.1" height="1.1"/><rect x="426.9" y="597.3" width="0.8" height="0.8"/><rect x="429.3" y="626.2" width="0.4" height="0.4"/><rect x="461.4" y="611.4" width="0.7" height="0.7"/><rect x="432.0" y="595.3" width="0.8" height="0.8"/><rect x="435.7" y="620.5" width="0.5" height="0.5"/><rect x="425.5" y="591.6" width="1.1" height="1.1"/><rect x="422.6" y="603.0" width="0.7" height="0.7"/><rect x="403.4" y="604.2" width="0.7" height="0.7"/><rect x="434.3" y="659.2" width="1.2" height="1.2"/><rect x="427.0" y="585.6" width="0.5" height="0.5"/><rect x="427.6" y="611.3" width="0.4" height="0.4"/><rect x="416.8" y="601.8" width="0.9" height="0.9"/><rect x="427.0" y="605.4" width="1.0" height="1.0"/><rect x="420.1" y="580.4" width="0.9" height="0.9"/><rect x="416.5" y="544.8" width="1.2" height="1.2"/><rect x="425.8" y="581.2" width="0.7" height="0.7"/><rect x="402.2" y="631.8" width="0.7" height="0.7"/><rect x="419.5" y="617.9" width="0.5" height="0.5"/><rect x="429.1" y="603.0" width="0.9" height="0.9"/><rect x="435.5" y="595.5" width="0.9" height="0.9"/><rect x="422.2" y="614.4" width="0.5" height="0.5"/><rect x="443.8" y="631.2" width="1.1" height="1.1"/><rect x="430.9" y="599.2" width="1.0" height="1.0"/><rect x="420.9" y="631.3" width="0.9" height="0.9"/><rect x="416.2" y="656.8" width="0.4" height="0.4"/><rect x="427.5" y="559.9" width="0.8" height="0.8"/><rect x="398.2" y="563.9" width="0.6" height="0.6"/><rect x="415.5" y="576.6" width="0.7" height="0.7"/><rect x="425.4" y="581.6" width="0.8" height="0.8"/><rect x="415.4" y="581.5" width="0.7" height="0.7"/><rect x="418.5" y="583.1" width="0.6" height="0.6"/><rect x="421.4" y="591.8" width="1.2" height="1.2"/><rect x="410.7" y="608.9" width="0.8" height="0.8"/><rect x="420.3" y="605.3" width="0.5" height="0.5"/><rect x="440.1" y="591.1" width="0.8" height="0.8"/><rect x="408.1" y="596.1" width="0.6" height="0.6"/><rect x="437.6" y="639.1" width="0.8" height="0.8"/><rect x="414.9" y="571.1" width="1.2" height="1.2"/><rect x="430.2" y="598.2" width="0.7" height="0.7"/><rect x="438.0" y="567.7" width="0.5" height="0.5"/><rect x="432.8" y="616.8" width="0.4" height="0.4"/><rect x="415.7" y="634.1" width="0.8" height="0.8"/><rect x="423.5" y="605.8" width="0.7" height="0.7"/><rect x="444.9" y="602.4" width="0.8" height="0.8"/><rect x="408.5" y="608.3" width="1.1" height="1.1"/><rect x="437.8" y="629.9" width="0.7" height="0.7"/><rect x="420.0" y="600.9" width="0.7" height="0.7"/><rect x="422.2" y="621.2" width="0.4" height="0.4"/><rect x="432.3" y="630.3" width="0.4" height="0.4"/><rect x="435.6" y="634.5" width="0.6" height="0.6"/><rect x="424.3" y="617.6" width="1.1" height="1.1"/><rect x="441.1" y="620.0" width="1.2" height="1.2"/><rect x="431.4" y="625.0" width="1.1" height="1.1"/><rect x="420.2" y="588.7" width="0.4" height="0.4"/><rect x="418.2" y="610.4" width="1.0" height="1.0"/><rect x="424.8" y="624.6" width="1.0" height="1.0"/><rect x="431.8" y="584.0" width="0.7" height="0.7"/><rect x="406.0" y="579.2" width="0.5" height="0.5"/><rect x="445.1" y="596.8" width="0.7" height="0.7"/><rect x="423.0" y="586.0" width="0.4" height="0.4"/><rect x="428.4" y="581.5" width="0.8" height="0.8"/><rect x="404.3" y="604.0" width="1.1" height="1.1"/><rect x="442.6" y="607.7" width="0.8" height="0.8"/><rect x="407.5" y="612.9" width="0.7" height="0.7"/><rect x="405.2" y="610.6" width="0.8" height="0.8"/></g><g fill="#1a1a1a" opacity="0.7"><rect x="436.6" y="615.7" width="0.9" height="0.9"/><rect x="439.5" y="600.6" width="0.6" height="0.6"/><rect x="455.2" y="618.8" width="0.7" height="0.7"/><rect x="446.4" y="598.0" width="0.4" height="0.4"/><rect x="445.5" y="618.9" width="0.9" height="0.9"/><rect x="447.4" y="617.6" width="0.8" height="0.8"/><rect x="442.8" y="613.7" width="0.8" height="0.8"/><rect x="443.1" y="603.9" width="0.4" height="0.4"/><rect x="442.4" y="605.3" width="0.7" height="0.7"/><rect x="457.9" y="614.8" width="0.9" height="0.9"/><rect x="448.9" y="622.1" width="0.7" height="0.7"/><rect x="465.9" y="616.1" width="0.5" height="0.5"/><rect x="444.5" y="623.6" width="0.5" height="0.5"/><rect x="450.6" y="605.1" width="0.7" height="0.7"/><rect x="443.0" y="616.6" width="0.5" height="0.5"/><rect x="453.4" y="601.6" width="0.9" height="0.9"/><rect x="444.8" y="621.7" width="0.4" height="0.4"/><rect x="438.4" y="612.8" width="0.7" height="0.7"/><rect x="435.8" y="615.9" width="0.6" height="0.6"/><rect x="446.5" y="608.7" width="0.9" height="0.9"/><rect x="442.9" y="613.9" width="0.6" height="0.6"/><rect x="438.0" y="612.9" width="0.7" height="0.7"/><rect x="442.5" y="622.2" width="0.9" height="0.9"/><rect x="442.2" y="630.2" width="0.9" height="0.9"/><rect x="438.5" y="609.0" width="1.0" height="1.0"/><rect x="431.5" y="622.0" width="0.4" height="0.4"/><rect x="435.9" y="620.8" width="0.4" height="0.4"/><rect x="446.8" y="612.1" width="0.7" height="0.7"/><rect x="451.7" y="635.5" width="0.7" height="0.7"/><rect x="447.6" y="603.8" width="0.8" height="0.8"/><rect x="442.3" y="607.6" width="0.5" height="0.5"/><rect x="447.1" y="610.2" width="0.9" height="0.9"/><rect x="445.9" y="619.4" width="0.4" height="0.4"/><rect x="448.7" y="591.0" width="0.6" height="0.6"/><rect x="442.1" y="608.5" width="0.9" height="0.9"/><rect x="443.4" y="609.7" width="0.4" height="0.4"/><rect x="444.3" y="612.2" width="0.9" height="0.9"/><rect x="443.6" y="622.0" width="0.7" height="0.7"/><rect x="441.2" y="626.6" width="0.5" height="0.5"/><rect x="450.3" y="610.3" width="0.9" height="0.9"/><rect x="452.3" y="629.6" width="1.0" height="1.0"/><rect x="443.6" y="616.6" width="0.6" height="0.6"/><rect x="441.8" y="609.5" width="0.7" height="0.7"/><rect x="451.5" y="621.2" width="0.8" height="0.8"/><rect x="435.5" y="621.4" width="0.4" height="0.4"/><rect x="446.7" y="610.5" width="1.0" height="1.0"/><rect x="461.6" y="614.4" width="0.7" height="0.7"/><rect x="443.4" y="623.9" width="0.8" height="0.8"/><rect x="428.9" y="615.5" width="0.4" height="0.4"/><rect x="431.1" y="616.9" width="0.7" height="0.7"/><rect x="442.1" y="613.9" width="0.4" height="0.4"/><rect x="443.0" y="636.0" width="0.9" height="0.9"/><rect x="447.3" y="637.5" width="0.4" height="0.4"/><rect x="430.1" y="599.8" width="0.6" height="0.6"/><rect x="454.6" y="610.0" width="0.4" height="0.4"/><rect x="441.2" y="624.5" width="0.5" height="0.5"/><rect x="444.8" y="608.7" width="0.9" height="0.9"/><rect x="444.2" y="618.6" width="0.7" height="0.7"/><rect x="452.3" y="622.2" width="0.9" height="0.9"/><rect x="438.6" y="608.7" width="0.4" height="0.4"/><rect x="441.8" y="614.6" width="0.8" height="0.8"/><rect x="451.2" y="624.7" width="0.6" height="0.6"/><rect x="437.7" y="625.5" width="0.5" height="0.5"/><rect x="453.1" y="635.9" width="0.6" height="0.6"/><rect x="452.8" y="598.0" width="0.7" height="0.7"/><rect x="446.8" y="618.6" width="0.9" height="0.9"/><rect x="451.1" y="622.9" width="0.7" height="0.7"/><rect x="450.8" y="622.6" width="0.5" height="0.5"/><rect x="436.9" y="612.4" width="0.6" height="0.6"/><rect x="447.3" y="624.6" width="0.5" height="0.5"/><rect x="448.6" y="620.3" width="0.9" height="0.9"/><rect x="430.3" y="614.8" width="0.4" height="0.4"/><rect x="452.6" y="611.0" width="0.9" height="0.9"/><rect x="435.3" y="608.5" width="0.5" height="0.5"/><rect x="445.0" y="609.2" width="0.5" height="0.5"/><rect x="451.9" y="616.9" width="0.7" height="0.7"/><rect x="441.2" y="635.3" width="0.4" height="0.4"/><rect x="440.5" y="611.5" width="0.7" height="0.7"/><rect x="447.3" y="599.6" width="0.4" height="0.4"/><rect x="445.3" y="628.5" width="1.0" height="1.0"/></g><g fill="#1a1a1a" opacity="0.6"><rect x="538.4" y="631.6" width="0.7" height="0.7"/><rect x="528.6" y="619.6" width="0.8" height="0.8"/><rect x="503.1" y="633.4" width="0.4" height="0.4"/><rect x="534.6" y="624.2" width="0.6" height="0.6"/><rect x="531.4" y="631.9" width="0.8" height="0.8"/><rect x="522.5" y="622.8" width="0.5" height="0.5"/><rect x="529.2" y="633.1" width="0.5" height="0.5"/><rect x="511.7" y="651.8" width="0.9" height="0.9"/><rect x="528.0" y="617.0" width="0.6" height="0.6"/><rect x="529.0" y="606.5" width="0.8" height="0.8"/><rect x="520.6" y="623.0" width="0.7" height="0.7"/><rect x="534.9" y="613.5" width="0.4" height="0.4"/><rect x="523.1" y="618.9" width="0.4" height="0.4"/><rect x="539.6" y="624.8" width="0.8" height="0.8"/><rect x="537.4" y="642.1" width="0.9" height="0.9"/><rect x="538.7" y="618.7" width="0.8" height="0.8"/><rect x="529.3" y="615.4" width="0.6" height="0.6"/><rect x="533.0" y="612.4" width="0.8" height="0.8"/><rect x="517.3" y="652.3" width="0.6" height="0.6"/><rect x="529.7" y="626.3" width="0.9" height="0.9"/><rect x="526.8" y="620.6" width="0.8" height="0.8"/><rect x="525.7" y="634.6" width="0.6" height="0.6"/><rect x="526.0" y="639.6" width="0.8" height="0.8"/><rect x="518.8" y="613.5" width="0.6" height="0.6"/><rect x="528.7" y="610.6" width="0.7" height="0.7"/><rect x="542.5" y="621.3" width="0.6" height="0.6"/><rect x="537.4" y="635.6" width="0.8" height="0.8"/><rect x="517.8" y="639.4" width="0.8" height="0.8"/><rect x="525.3" y="627.1" width="0.6" height="0.6"/><rect x="529.8" y="628.5" width="0.8" height="0.8"/><rect x="513.1" y="634.7" width="0.6" height="0.6"/><rect x="521.5" y="634.0" width="0.5" height="0.5"/><rect x="532.8" y="616.5" width="0.5" height="0.5"/><rect x="531.8" y="632.2" width="0.7" height="0.7"/><rect x="511.3" y="633.2" width="0.8" height="0.8"/><rect x="536.0" y="638.4" width="0.4" height="0.4"/><rect x="527.8" y="622.3" width="0.5" height="0.5"/><rect x="534.2" y="625.5" width="0.5" height="0.5"/><rect x="535.6" y="619.2" width="0.8" height="0.8"/><rect x="515.7" y="635.3" width="0.9" height="0.9"/></g></g></g></svg>
<div class="a" style="left:1176px;top:50px;width:363px;height:664px;background:#303030;border-radius:6px 0 0 6px;overflow:hidden">
<div class="a" style="left:0px;top:0px;width:363px;height:25px;background:#2e2e2e;"></div>
</div>
<svg style="left:0;top:0" width="1539" height="1377" viewBox="0 0 1539 1377"><defs><clipPath id="imclip"><rect x="1266" y="75" width="273" height="578"/></clipPath><filter id="spk" x="1266" y="75" width="273" height="578" filterUnits="userSpaceOnUse" color-interpolation-filters="sRGB"><feTurbulence type="fractalNoise" baseFrequency="0.8" numOctaves="2" seed="11" result="n"/><feColorMatrix in="n" type="matrix" values="0 0 0 0 0.64  0 0 0 0 0.64  0 0 0 0 0.64  9 0 0 0 -6.1" result="w"/><feColorMatrix in="n" type="matrix" values="0 0 0 0 0.3  0 0 0 0 0.3  0 0 0 0 0.3  0 -9 0 0 3.05" result="b"/><feMerge result="m"><feMergeNode in="SourceGraphic"/><feMergeNode in="w"/><feMergeNode in="b"/></feMerge><feComposite in="m" in2="SourceGraphic" operator="in"/></filter></defs><rect x="1266" y="75" width="273" height="578" fill="#000"/><g clip-path="url(#imclip)"><g filter="url(#spk)"><path d="M1296.0 78.7 C1296.0 78.7 1309.0 76.5 1309.0 76.5 C1309.0 76.5 1334.1 116.8 1334.1 116.8 C1334.1 116.8 1348.4 90.7 1351.5 85.3 C1354.6 79.9 1357.0 76.5 1357.0 76.5 C1357.0 76.5 1355.9 120.1 1355.9 120.1 C1355.9 120.1 1373.3 97.2 1373.3 97.2 C1373.3 97.2 1364.3 124.6 1364.6 133.2 C1364.9 141.8 1375.5 161.5 1375.5 161.5 C1375.5 161.5 1353.2 166.4 1347.1 170.2 C1341.0 174.0 1329.7 189.8 1329.7 189.8 C1329.7 189.8 1315.9 189.7 1310.1 188.7 C1304.3 187.7 1286.1 182.2 1286.1 182.2 C1286.1 182.2 1287.2 170.2 1287.2 170.2 C1287.2 170.2 1310.1 165.9 1310.1 165.9 C1310.1 165.9 1309.3 151.5 1303.6 146.3 C1297.9 141.1 1267.6 126.6 1267.6 126.6 C1267.6 126.6 1267.6 121.2 1267.6 121.2 C1267.6 121.2 1307.9 127.7 1307.9 127.7 C1307.9 127.7 1296.0 78.7 1296.0 78.7 Z" fill="#777777"/><path d="M1375.5 98.3 C1375.5 98.3 1382.0 85.3 1382.0 85.3 C1382.0 85.3 1404.8 80.1 1412.5 78.7 C1420.2 77.3 1439.7 75.0 1439.7 75.0 C1439.7 75.0 1447.5 110.3 1448.5 120.1 C1449.5 129.9 1447.4 148.4 1447.4 148.4 C1447.4 148.4 1430.0 168.0 1430.0 168.0 C1430.0 168.0 1416.6 166.0 1412.5 163.7 C1408.4 161.4 1402.9 156.4 1399.4 150.6 C1395.9 144.8 1389.6 127.1 1386.4 120.1 C1383.2 113.1 1375.5 98.3 1375.5 98.3 Z" fill="#7b7b7b"/><path d="M1488.8 75.0 C1488.8 75.0 1539.0 75.0 1539.0 75.0 C1539.0 75.0 1539.0 170.2 1539.0 170.2 C1539.0 170.2 1501.8 168.0 1501.8 168.0 C1501.8 168.0 1496.4 187.6 1496.4 187.6 C1496.4 187.6 1483.9 180.3 1477.9 178.9 C1471.9 177.5 1451.7 176.8 1451.7 176.8 C1451.7 176.8 1449.5 141.9 1449.5 141.9 C1449.5 141.9 1465.3 138.4 1469.1 133.2 C1472.9 128.0 1475.3 110.5 1477.9 102.7 C1480.5 94.9 1488.8 75.0 1488.8 75.0 Z" fill="#7b7b7b"/><path d="M1273.1 189.8 C1273.1 189.8 1325.4 192.0 1325.4 192.0 C1325.4 192.0 1338.4 198.5 1338.4 198.5 C1338.4 198.5 1360.2 189.8 1360.2 189.8 C1360.2 189.8 1367.4 231.5 1368.9 244.3 C1370.4 257.1 1371.1 285.7 1371.1 285.7 C1371.1 285.7 1362.4 290.0 1362.4 290.0 C1362.4 290.0 1366.8 314.0 1366.8 314.0 C1366.8 314.0 1375.5 314.0 1375.5 314.0 C1375.5 314.0 1360.3 348.6 1355.9 360.0 C1351.5 371.4 1344.7 388.7 1342.8 399.2 C1340.9 409.7 1341.7 438.4 1341.7 438.4 C1341.7 438.4 1327.9 444.0 1318.8 442.8 C1309.7 441.6 1273.1 429.7 1273.1 429.7 C1273.1 429.7 1270.8 397.3 1270.0 380.0 C1269.2 362.7 1266.9 315.2 1267.0 300.0 C1267.1 284.8 1270.1 280.7 1270.9 266.0 C1271.7 251.3 1273.1 189.8 1273.1 189.8 Z" fill="#7b7b7b"/><path d="M1392.9 168.0 C1392.9 168.0 1445.2 183.3 1445.2 183.3 C1445.2 183.3 1430.0 212.0 1425.6 222.5 C1421.2 233.0 1414.2 253.0 1412.5 261.7 C1410.8 270.4 1411.0 274.8 1412.5 287.9 C1414.0 301.0 1419.0 340.5 1423.4 360.0 C1427.8 379.5 1445.2 434.0 1445.2 434.0 C1445.2 434.0 1423.4 442.8 1423.4 442.8 C1423.4 442.8 1414.1 414.6 1410.3 403.6 C1406.5 392.6 1398.9 372.5 1395.1 360.0 C1391.3 347.5 1382.0 309.6 1382.0 309.6 C1382.0 309.6 1390.7 307.5 1390.7 307.5 C1390.7 307.5 1390.7 281.3 1390.7 281.3 C1390.7 281.3 1376.6 274.8 1376.6 274.8 C1376.6 274.8 1375.4 236.7 1377.6 222.5 C1379.8 208.3 1392.9 168.0 1392.9 168.0 Z" fill="#7b7b7b"/><path d="M1467.0 189.8 C1467.0 189.8 1488.8 198.5 1488.8 198.5 C1488.8 198.5 1499.6 190.9 1499.6 190.9 C1499.6 190.9 1539.0 194.2 1539.0 194.2 C1539.0 194.2 1539.0 437.3 1539.0 437.3 C1539.0 437.3 1517.1 442.8 1517.1 442.8 C1517.1 442.8 1503.7 442.3 1499.6 441.7 C1495.5 441.1 1486.6 438.4 1486.6 438.4 C1486.6 438.4 1487.8 417.1 1486.6 410.1 C1485.4 403.1 1480.2 392.8 1477.9 386.1 C1475.6 379.4 1472.8 371.1 1469.2 360.0 C1465.6 348.9 1450.6 303.1 1450.6 303.1 C1450.6 303.1 1460.4 305.3 1460.4 305.3 C1460.4 305.3 1467.0 287.9 1467.0 287.9 C1467.0 287.9 1457.2 283.5 1457.2 283.5 C1457.2 283.5 1459.1 245.9 1460.4 233.4 C1461.7 220.9 1467.0 189.8 1467.0 189.8 Z" fill="#7b7b7b"/><path d="M1281.8 479.8 C1281.8 479.8 1318.4 485.8 1329.7 484.2 C1341.0 482.6 1360.7 471.3 1366.8 467.8 C1372.9 464.3 1374.1 461.0 1375.5 458.0 C1376.9 455.0 1377.6 445.0 1377.6 445.0 C1377.6 445.0 1412.5 442.8 1412.5 442.8 C1412.5 442.8 1428.6 457.8 1432.1 462.4 C1435.6 467.0 1436.4 474.4 1438.7 477.6 C1441.0 480.8 1449.5 486.4 1449.5 486.4 C1449.5 486.4 1445.1 501.5 1445.2 512.5 C1445.3 523.5 1450.6 569.2 1450.6 569.2 C1450.6 569.2 1443.0 571.3 1443.0 571.3 C1443.0 571.3 1438.4 584.2 1434.3 590.9 C1430.2 597.6 1418.3 615.9 1412.5 621.4 C1406.7 626.9 1395.6 628.2 1390.7 632.3 C1385.8 636.4 1375.5 651.9 1375.5 651.9 C1375.5 651.9 1337.0 643.2 1325.4 638.9 C1313.8 634.6 1295.0 621.8 1288.3 619.3 C1281.6 616.8 1278.2 621.5 1275.3 620.3 C1272.4 619.1 1266.5 610.5 1266.5 610.5 C1266.5 610.5 1265.3 564.8 1266.5 551.7 C1267.7 538.6 1273.3 522.1 1275.3 512.5 C1277.3 502.9 1281.8 479.8 1281.8 479.8 Z" fill="#7b7b7b"/><path d="M1456.1 473.3 C1456.1 473.3 1467.0 453.7 1467.0 453.7 C1467.0 453.7 1492.9 445.2 1499.6 443.9 C1506.3 442.6 1511.8 443.5 1517.1 443.9 C1522.4 444.3 1539.0 447.1 1539.0 447.1 C1539.0 447.1 1539.0 623.6 1539.0 623.6 C1539.0 623.6 1510.4 605.2 1499.6 602.9 C1488.8 600.6 1458.3 606.2 1458.3 606.2 C1458.3 606.2 1455.4 562.0 1453.9 549.5 C1452.4 537.0 1447.4 520.6 1447.4 512.5 C1447.4 504.4 1452.7 493.7 1453.9 488.5 C1455.1 483.3 1456.1 473.3 1456.1 473.3 Z" fill="#7b7b7b"/></g><path d="M1347.1 500.5 L1358 499 L1371 504 L1370 526 L1356 530 L1349 527 L1346 512 Z M1525.8 566 L1532 560.4 L1539 561 L1539 591 L1531 587 L1526 578 Z M1414.5 514.5 L1420 511.5 L1428 512 L1421 516 Z" fill="#000"/></g><path d="M1266.5 75 V653.5 H1539" fill="none" stroke="#6a6a6a" stroke-width="1"/></svg>
<div class="a" style="left:1184px;top:53px;width:30px;height:19px;background:#282828;border-radius:4px;border:1px solid #3a3a3a;"></div>
<svg style="left:1188px;top:55px;" width="16" height="15" viewBox="0 0 16 15"><path d="M0.5 14.5 V0.5 H2.5 M0.5 14.5 H13.5 V6" fill="none" stroke="#dcdcdc" stroke-width="1"/><path d="M3 0.5 H13.5 V4.5 H10 V9 H6.5 V4.5 H3 Z" fill="#dcdcdc"/></svg>
<svg style="left:1203.5px;top:59px;" width="10" height="8" viewBox="0 0 10 8"><path d="M1.7999999999999998 2.4 L5 5.6 L8.2 2.4" fill="none" stroke="#cfcfcf" stroke-width="1.3"/></svg>
<div class="a" style="left:1220px;top:53px;width:66px;height:19px;background:#282828;border-radius:4px;border:1px solid #3a3a3a;"></div>
<svg style="left:1224px;top:55px;" width="16" height="15" viewBox="0 0 16 15"><path d="M0.5 0.5 H2 M0.5 0.5 V14.5 H1.5 M11.5 0.5 H14.5 V14.5 H13" fill="none" stroke="#dcdcdc" stroke-width="1"/><path d="M1.5 14.5 L6 6.5 L10.5 14.5 Z" fill="#dcdcdc"/><circle cx="11" cy="4" r="1.6" fill="#dcdcdc"/></svg>
<div class="t" style="left:1246.0px;top:57.43px;font-size:11.6px;line-height:11.6px;color:#dcdcdc;letter-spacing:-0.15px;">View</div>
<svg style="left:1273.5px;top:59px;" width="10" height="8" viewBox="0 0 10 8"><path d="M1.7999999999999998 2.4 L5 5.6 L8.2 2.4" fill="none" stroke="#cfcfcf" stroke-width="1.3"/></svg>
<div class="t" style="left:1298.4px;top:57.43px;font-size:11.6px;line-height:11.6px;color:#d6d6d6;letter-spacing:-0.15px;">View</div>
<div class="t" style="left:1337.5px;top:57.43px;font-size:11.6px;line-height:11.6px;color:#d6d6d6;letter-spacing:-0.15px;">Image</div>
<div class="a" style="left:1501px;top:53px;width:31px;height:19px;background:#282828;border-radius:4px;border:1px solid #3a3a3a;"></div>
<svg style="left:1505px;top:55px;" width="16" height="15" viewBox="0 0 16 15"><path d="M0.5 0.5 H2 M0.5 0.5 V14.5 H1.5 M11.5 0.5 H14.5 V14.5 H13" fill="none" stroke="#dcdcdc" stroke-width="1"/><path d="M1.5 14.5 L6 6.5 L10.5 14.5 Z" fill="#dcdcdc"/><circle cx="11" cy="4" r="1.6" fill="#dcdcdc"/></svg>
<svg style="left:1520px;top:59px;" width="10" height="8" viewBox="0 0 10 8"><path d="M1.7999999999999998 2.4 L5 5.6 L8.2 2.4" fill="none" stroke="#cfcfcf" stroke-width="1.3"/></svg>
<div class="a" style="left:1533px;top:53px;width:10px;height:19px;background:#282828;border-radius:4px;border:1px solid #3a3a3a;"></div>
<div class="a" style="left:1176px;top:86px;width:8px;height:20px;background:#242424;border-radius:0 4px 4px 0"></div>
<svg style="left:1177px;top:92px;" width="6" height="9" viewBox="0 0 6 9"><path d="M1 0.8 L4.7 4.5 L1 8.2" fill="none" stroke="#b0b0b0" stroke-width="1.1"/></svg>
<div class="a" style="left:0px;top:717px;width:1539px;height:660px;background:#1d1d1d;"></div>
<svg style="left:0;top:717px" width="1539" height="660" viewBox="0 717 1539 660"><defs><pattern id="dots" x="22" y="742" width="26.83" height="26.83" patternUnits="userSpaceOnUse"><rect x="0" y="0" width="3" height="3" fill="#2a2a2a"/></pattern></defs><rect x="0" y="720" width="1539" height="657" fill="url(#dots)"/></svg>
<div class="a" style="left:0px;top:714px;width:1539px;height:3px;background:#161616;"></div>
<div class="a" style="left:2px;top:720px;width:32px;height:20px;background:#282828;border-radius:4px;border:1px solid #3a3a3a;"></div>
<svg style="left:6px;top:722px;" width="17" height="16" viewBox="0 0 17 16"><circle cx="8" cy="8.5" r="6.8" fill="none" stroke="#e0e0e0" stroke-width="1.2"/><path d="M3.8 6.5 A4.5 4.5 0 0 1 5.5 4" fill="none" stroke="#e0e0e0" stroke-width="1.3"/><circle cx="8" cy="3.5" r="0.8" fill="#e0e0e0"/></svg>
<svg style="left:22.2px;top:726.5px;" width="10" height="8" viewBox="0 0 10 8"><path d="M1.7999999999999998 2.4 L5 5.6 L8.2 2.4" fill="none" stroke="#cfcfcf" stroke-width="1.3"/></svg>
<div class="a" style="left:39px;top:720px;width:89px;height:20px;background:#282828;border-radius:4px;border:1px solid #3a3a3a;"></div>
<svg style="left:44px;top:723px;" width="15" height="14" viewBox="0 0 15 14"><path d="M0.5 3.5 V0.5 H3.5 M10.5 0.5 H13.5 V3.5 M13.5 10.5 V13.5 H10.5 M3.5 13.5 H0.5 V10.5" fill="none" stroke="#cfcfcf" stroke-width="1"/><rect x="3" y="3" width="8" height="8" fill="#e6e6e6"/></svg>
<div class="t" style="left:65.0px;top:724.23px;font-size:11.6px;line-height:11.6px;color:#e0e0e0;letter-spacing:-0.15px;">Object</div>
<svg style="left:116px;top:726.8px;" width="10" height="8" viewBox="0 0 10 8"><path d="M1.7999999999999998 2.4 L5 5.6 L8.2 2.4" fill="none" stroke="#cfcfcf" stroke-width="1.3"/></svg>
<div class="t" style="left:139.6px;top:724.23px;font-size:11.6px;line-height:11.6px;color:#d6d6d6;letter-spacing:-0.15px;">View</div>
<div class="t" style="left:179.6px;top:724.23px;font-size:11.6px;line-height:11.6px;color:#d6d6d6;letter-spacing:-0.15px;">Select</div>
<div class="t" style="left:225.4px;top:724.23px;font-size:11.6px;line-height:11.6px;color:#d6d6d6;letter-spacing:-0.15px;">Add</div>
<div class="t" style="left:259.9px;top:724.23px;font-size:11.6px;line-height:11.6px;color:#d6d6d6;letter-spacing:-0.15px;">Node</div>
<div class="a" style="left:299.5px;top:724px;width:13px;height:13px;background:#4772b3;border-radius:3px;"></div>
<svg style="left:300px;top:725px;" width="12" height="11" viewBox="0 0 12 11"><path d="M2.5 5.8 L5 8.3 L9.7 2.8" fill="none" stroke="#fff" stroke-width="1.5"/></svg>
<div class="t" style="left:316.0px;top:724.23px;font-size:11.6px;line-height:11.6px;color:#e0e0e0;letter-spacing:-0.4px;">Use Nodes</div>
<div class="a" style="left:864px;top:720px;width:80px;height:20px;background:#282828;border-radius:4px;border:1px solid #3a3a3a;"></div>
<div class="t" style="left:872.0px;top:724.63px;font-size:11.6px;line-height:11.6px;color:#dcdcdc;letter-spacing:-0.1px;">Slot 1</div>
<svg style="left:932.5px;top:727.5px;" width="10" height="8" viewBox="0 0 10 8"><path d="M1.7999999999999998 2.4 L5 5.6 L8.2 2.4" fill="none" stroke="#cfcfcf" stroke-width="1.3"/></svg>
<div class="a" style="left:949px;top:720px;width:236px;height:20px;background:#282828;border-radius:4px;border:1px solid #3a3a3a;"></div>
<div class="a" style="left:981px;top:721px;width:119px;height:18px;background:#1d1d1d;"></div>
<div class="a" style="left:980px;top:720px;width:1px;height:20px;background:#3a3a3a;"></div>
<svg style="left:954px;top:723px;" width="15" height="15" viewBox="0 0 15 15"><circle cx="7" cy="7" r="6.9" fill="#e8e8e8"/><path d="M7.6 1.2999999999999998 A5.7 5.7 0 0 1 12.7 6.2 Q9.85 8.6 7.6 8.4 Z" fill="#222"/><path d="M1.2999999999999998 7.4 Q4.15 8.9 6.4 9.2 L6.4 12.7 A5.7 5.7 0 0 1 1.2999999999999998 7.4 Z" fill="#222"/></svg>
<svg style="left:969.5px;top:727.5px;" width="10" height="8" viewBox="0 0 10 8"><path d="M1.7999999999999998 2.4 L5 5.6 L8.2 2.4" fill="none" stroke="#cfcfcf" stroke-width="1.3"/></svg>
<div class="t" style="left:988.3px;top:724.63px;font-size:11.6px;line-height:11.6px;color:#dcdcdc;letter-spacing:-0.1px;">Material</div>
<div class="a" style="left:1100px;top:720px;width:85px;height:20px;background:#555;border-radius:0 4px 4px 0"></div>
<div class="a" style="left:1124.5px;top:720px;width:1px;height:20px;background:#3d3d3d;"></div>
<div class="a" style="left:1145px;top:720px;width:1px;height:20px;background:#3d3d3d;"></div>
<div class="a" style="left:1164.5px;top:720px;width:1px;height:20px;background:#3d3d3d;"></div>
<div class="t" style="left:1109.7px;top:725.13px;font-size:11.6px;line-height:11.6px;color:#e0e0e0;">3</div>
<svg style="left:1128px;top:722px;" width="15" height="16" viewBox="0 0 15 16"><path d="M7.5 1 C9.5 2.5 11.5 3 13.5 3 C13.5 9 11.5 13 7.5 15 C3.5 13 1.5 9 1.5 3 C3.5 3 5.5 2.5 7.5 1Z" fill="none" stroke="#cfcfcf" stroke-width="1"/></svg>
<svg style="left:1147px;top:722px;" width="16" height="16" viewBox="0 0 16 16"><path d="M4.5 5 H1 V15 H10 V12" fill="none" stroke="#e0e0e0" stroke-width="1.1"/><path d="M4.5 1 H11 L14.5 4.5 V12 H4.5 Z" fill="none" stroke="#e0e0e0" stroke-width="1.1"/><path d="M11 1 V4.5 H14.5 Z" fill="#e0e0e0"/></svg>
<svg style="left:1169.5px;top:724px;" width="12" height="12" viewBox="0 0 12 12"><path d="M1.5 1.5 L10 10 M10 1.5 L1.5 10" stroke="#e8e8e8" stroke-width="1.2"/></svg>
<svg style="left:1192px;top:722px;" width="17" height="16" viewBox="0 0 17 16"><path d="M1 15 L6.5 9.5" stroke="#cfcfcf" stroke-width="1.1"/><path d="M9.5 1.5 L14.8 6.8 L12.5 7.5 L9.5 10.5 L10 12.5 L4 6.5 L6 7 L9 4 Z" fill="none" stroke="#cfcfcf" stroke-width="1"/></svg>
<svg style="left:12px;top:756px;" width="16" height="16" viewBox="0 0 16 16"><path d="M0.5 3.5 V0.5 H3.5 M11.5 0.5 H14.5 V3.5 M14.5 11.5 V14.5 H11.5 M3.5 14.5 H0.5 V11.5" fill="none" stroke="#cfcfcf" stroke-width="1"/><rect x="3" y="3" width="9" height="9" fill="#e6e6e6"/></svg>
<div class="t" style="left:35.8px;top:758.23px;font-size:11.6px;line-height:11.6px;color:#dcdcdc;letter-spacing:-0.33px;">retopo_head.symmSD</div>
<svg style="left:160px;top:760px;" width="8" height="10" viewBox="0 0 8 10"><path d="M1.5 1 L6 5 L1.5 9" fill="none" stroke="#cfcfcf" stroke-width="1.1"/></svg>
<svg style="left:176px;top:756px;" width="16" height="16" viewBox="0 0 16 16"><path d="M2.5 2.5 H13.5 L8 13.5 Z" fill="none" stroke="#e0e0e0" stroke-width="1.1"/><rect x="0.5" y="0.5" width="3.5" height="3.5" fill="#1d1d1d" stroke="#e0e0e0" stroke-width="1"/><rect x="12" y="0.5" width="3.5" height="3.5" fill="#1d1d1d" stroke="#e0e0e0" stroke-width="1"/><rect x="6.2" y="12" width="3.5" height="3.5" fill="#1d1d1d" stroke="#e0e0e0" stroke-width="1"/></svg>
<div class="t" style="left:200.0px;top:758.23px;font-size:11.6px;line-height:11.6px;color:#dcdcdc;letter-spacing:-0.37px;">retopo_head</div>
<svg style="left:276px;top:760px;" width="8" height="10" viewBox="0 0 8 10"><path d="M1.5 1 L6 5 L1.5 9" fill="none" stroke="#cfcfcf" stroke-width="1.1"/></svg>
<svg style="left:292px;top:756px;" width="16" height="16" viewBox="0 0 16 16"><circle cx="7.8" cy="8" r="6.9" fill="#e8e8e8"/><path d="M8.4 2.3 A5.7 5.7 0 0 1 13.5 7.2 Q10.65 9.6 8.4 9.4 Z" fill="#222"/><path d="M2.0999999999999996 8.4 Q4.949999999999999 9.9 7.2 10.2 L7.2 13.7 A5.7 5.7 0 0 1 2.0999999999999996 8.4 Z" fill="#222"/></svg>
<div class="t" style="left:316.0px;top:758.23px;font-size:11.6px;line-height:11.6px;color:#dcdcdc;letter-spacing:-0.1px;">Material</div>
<svg style="left:0;top:0" width="1539" height="1377" viewBox="0 0 1539 1377"><path d="M661.9 987.5 C708.3 987.5 718.6 1203.3 765 1203.3" fill="none" stroke="#151515" stroke-width="3.0"/><path d="M661.9 987.5 C708.3 987.5 718.6 1203.3 765 1203.3" fill="none" stroke="#a3a3a3" stroke-width="2.2"/><path d="M1086.8 986 C1136.3 986 1147.3 1130 1196.8 1130" fill="none" stroke="#151515" stroke-width="3.0"/><path d="M1086.8 986 C1136.3 986 1147.3 1130 1196.8 1130" fill="none" stroke="#cccc2e" stroke-width="2.2"/><path d="M1382.1 1140.7 C1457.0 1140.7 1119.9 1261.3 1194.8 1261.3" fill="none" stroke="#151515" stroke-width="3.0"/><path d="M1382.1 1140.7 C1457.0 1140.7 1119.9 1261.3 1194.8 1261.3" fill="none" stroke="#55c055" stroke-width="2.2"/></svg>
<div class="a" style="left:474.4px;top:911.2px;width:187.3px;height:296px;background:#303030;border-radius:6px;box-shadow:0 2px 6px 2px rgba(0,0,0,0.45);overflow:hidden"><div class="a" style="left:0;top:0;width:187.3px;height:27px;background:#83304a"></div></div>
<svg style="left:488px;top:921.5px;" width="14" height="9" viewBox="0 0 14 9"><path d="M1.5 1.5 L6.5 6.5 L11.5 1.5" fill="none" stroke="#e6e6e6" stroke-width="1.4"/></svg>
<div class="t" style="left:508.5px;top:916.41px;font-size:16px;line-height:16px;color:#e6e6e6;letter-spacing:-0.06px;text-shadow:0 1px 2px rgba(0,0,0,0.5)">Ambient Occlusion</div>
<div class="t" style="left:609.8px;top:950.11px;font-size:16px;line-height:16px;color:#e6e6e6;">Color</div>
<div class="t" style="left:626.3px;top:979.21px;font-size:16px;line-height:16px;color:#e6e6e6;letter-spacing:-1.2px;">AO</div>
<div class="a" style="left:488.6px;top:1015.7px;width:159.6px;height:25px;background:#545454;border-radius:5px;"></div>
<div class="t" style="left:509.7px;top:1020.11px;font-size:16px;line-height:16px;color:#e6e6e6;letter-spacing:-0.2px;">Samples</div>
<div class="t" style="left:612.0px;top:1020.11px;font-size:16px;line-height:16px;color:#e6e6e6;letter-spacing:-0.4px;">16</div>
<div class="a" style="left:488.6px;top:1052.7px;width:17.5px;height:17.5px;background:#545454;border-radius:3px;"></div>
<div class="t" style="left:510.3px;top:1053.11px;font-size:16px;line-height:16px;color:#e6e6e6;letter-spacing:-0.2px;">Inside</div>
<div class="a" style="left:488.6px;top:1086.6px;width:17.5px;height:17.5px;background:#545454;border-radius:3px;"></div>
<div class="t" style="left:510.3px;top:1086.81px;font-size:16px;line-height:16px;color:#e6e6e6;letter-spacing:-0.22px;">Only Local</div>
<div class="t" style="left:488.8px;top:1120.01px;font-size:16px;line-height:16px;color:#e6e6e6;">Color</div>
<div class="a" style="left:558px;top:1116px;width:90px;height:24.5px;background:#ffffff;border-radius:5px;"></div>
<div class="a" style="left:488.6px;top:1146.3px;width:159.6px;height:24.7px;background:#545454;border-radius:5px;"></div>
<div class="t" style="left:509.7px;top:1149.51px;font-size:16px;line-height:16px;color:#e6e6e6;letter-spacing:-0.12px;">Distance</div>
<div class="t" style="left:590.0px;top:1149.51px;font-size:16px;line-height:16px;color:#e6e6e6;letter-spacing:-0.25px;">1.000</div>
<div class="t" style="left:488.8px;top:1178.61px;font-size:16px;line-height:16px;color:#e6e6e6;letter-spacing:0.03px;">Normal</div>
<svg style="left:653.7px;top:950.1px;" width="16" height="16" viewBox="0 0 16 16"><circle cx="8" cy="8" r="6.4" fill="#c7c729" stroke="#111" stroke-width="1"/></svg>
<svg style="left:653.9px;top:979.5px;" width="16" height="16" viewBox="0 0 16 16"><circle cx="8" cy="8" r="6.4" fill="#a1a1a1" stroke="#111" stroke-width="1"/></svg>
<svg style="left:466px;top:1120.4px;" width="16" height="16" viewBox="0 0 16 16"><circle cx="8" cy="8" r="6.4" fill="#c7c729" stroke="#111" stroke-width="1"/></svg>
<svg style="left:466px;top:1150px;" width="16" height="16" viewBox="0 0 16 16"><circle cx="8" cy="8" r="6.4" fill="#a1a1a1" stroke="#111" stroke-width="1"/></svg>
<svg style="left:466px;top:1179.5px;" width="16" height="16" viewBox="0 0 16 16"><circle cx="8" cy="8" r="6.4" fill="#6363c7" stroke="#111" stroke-width="1"/></svg>
<div class="a" style="left:765.1px;top:939.4px;width:322.1px;height:284.3px;background:#303030;border-radius:6px;box-shadow:0 2px 6px 2px rgba(0,0,0,0.45);overflow:hidden"><div class="a" style="left:0;top:0;width:322.1px;height:26.5px;background:#226080"></div></div>
<svg style="left:779px;top:948.5px;" width="14" height="9" viewBox="0 0 14 9"><path d="M1.5 1.5 L6.5 6.5 L11.5 1.5" fill="none" stroke="#e6e6e6" stroke-width="1.4"/></svg>
<div class="t" style="left:797.5px;top:944.91px;font-size:16px;line-height:16px;color:#e6e6e6;letter-spacing:-0.12px;text-shadow:0 1px 2px rgba(0,0,0,0.5)">ColorRamp</div>
<div class="t" style="left:1034.9px;top:978.31px;font-size:16px;line-height:16px;color:#e6e6e6;">Color</div>
<div class="t" style="left:1031.8px;top:1008.21px;font-size:16px;line-height:16px;color:#e6e6e6;letter-spacing:-0.2px;">Alpha</div>
<svg style="left:786px;top:1056px;" width="14" height="14" viewBox="0 0 14 14"><path d="M7 1 V13 M1 7 H13" stroke="#e6e6e6" stroke-width="1.4"/></svg>
<svg style="left:820px;top:1062px;" width="14" height="2" viewBox="0 0 14 2"><path d="M1 1 H13" stroke="#e6e6e6" stroke-width="1.4"/></svg>
<svg style="left:859.5px;top:1059.5px;" width="14" height="9" viewBox="0 0 14 9"><path d="M1.5 1.5 L6.5 6.5 L11.5 1.5" fill="none" stroke="#e6e6e6" stroke-width="1.4"/></svg>
<div class="a" style="left:902.5px;top:1050.4px;width:171px;height:25px;background:#282828;border-radius:5px;border:1px solid #3a3a3a;"></div>
<div class="a" style="left:987px;top:1050.4px;width:1px;height:25px;background:#3a3a3a;"></div>
<div class="t" style="left:913.0px;top:1054.81px;font-size:16px;line-height:16px;color:#e6e6e6;letter-spacing:-1.3px;">RGB</div>
<svg style="left:974.2px;top:1060px;" width="10" height="8" viewBox="0 0 10 8"><path d="M1.3200000000000003 2.16 L5 5.84 L8.68 2.16" fill="none" stroke="#e6e6e6" stroke-width="1.4"/></svg>
<div class="t" style="left:998.0px;top:1054.81px;font-size:16px;line-height:16px;color:#e6e6e6;letter-spacing:-1.0px;">Ease</div>
<svg style="left:1060.5px;top:1060px;" width="10" height="8" viewBox="0 0 10 8"><path d="M1.3200000000000003 2.16 L5 5.84 L8.68 2.16" fill="none" stroke="#e6e6e6" stroke-width="1.4"/></svg>
<div class="a" style="left:783.7px;top:1082.4px;width:284.7px;height:27px;background:linear-gradient(to right,#000 0,#000 40.8%,#121212 45%,#4a4a4a 50%,#999 55.6%,#d8d8d8 61%,#f8f8f8 66%,#fff 70.7%,#fff 100%);border:1px solid #111;border-bottom:1px solid #777"></div>
<svg style="left:896px;top:1083px;" width="6" height="14" viewBox="0 0 6 14"><path d="M3 0 V14" stroke="#fff" stroke-width="1" stroke-dasharray="1.5 1.5"/></svg>
<svg style="left:891px;top:1096px;" width="16" height="18" viewBox="0 0 16 18"><path d="M1.5 6.5 L8 0.8 L14.5 6.5 V16.5 H1.5 Z" fill="#000" stroke="#000" stroke-width="1"/><path d="M2.5 6.5 L8 1.8 L13.5 6.5 Z" fill="#e6e6e6"/><rect x="2.8" y="7.8" width="10.4" height="7.5" fill="#000" stroke="#ddd" stroke-width="0.8"/></svg>
<svg style="left:986px;top:1096px;" width="16" height="18" viewBox="0 0 16 18"><path d="M1.5 6.5 L8 0.8 L14.5 6.5 V16.5 H1.5 Z" fill="#000" stroke="#000" stroke-width="1"/><path d="M2.5 6.5 L8 1.8 L13.5 6.5 Z" fill="#777"/><rect x="2.8" y="7.8" width="10.4" height="7.5" fill="#fff"/></svg>
<div class="a" style="left:779.7px;top:1123.9px;width:82.5px;height:25.1px;background:#545454;border-radius:5px;"></div>
<div class="t" style="left:816.2px;top:1128.11px;font-size:16px;line-height:16px;color:#e6e6e6;">0</div>
<div class="a" style="left:875px;top:1123.9px;width:198.3px;height:25.1px;background:#545454;border-radius:5px;"></div>
<div class="t" style="left:895.5px;top:1128.11px;font-size:16px;line-height:16px;color:#e6e6e6;letter-spacing:-1.1px;">Pos</div>
<div class="t" style="left:1015.3px;top:1128.11px;font-size:16px;line-height:16px;color:#e6e6e6;letter-spacing:-0.1px;">0.403</div>
<div class="a" style="left:779.7px;top:1157.5px;width:293.6px;height:25.4px;background:#000;border-radius:5px;"></div>
<div class="t" style="left:779.5px;top:1194.91px;font-size:16px;line-height:16px;color:#e6e6e6;letter-spacing:-0.7px;">Fac</div>
<svg style="left:1078.8px;top:978px;" width="16" height="16" viewBox="0 0 16 16"><circle cx="8" cy="8" r="6.4" fill="#c7c729" stroke="#111" stroke-width="1"/></svg>
<svg style="left:1078.8px;top:1007.9px;" width="16" height="16" viewBox="0 0 16 16"><circle cx="8" cy="8" r="6.4" fill="#a1a1a1" stroke="#111" stroke-width="1"/></svg>
<svg style="left:757px;top:1195.3px;" width="16" height="16" viewBox="0 0 16 16"><circle cx="8" cy="8" r="6.4" fill="#a1a1a1" stroke="#111" stroke-width="1"/></svg>
<div class="a" style="left:1194.8px;top:1120.7px;width:187.3px;height:39.8px;background:#9a7f68;border-radius:20px;box-shadow:0 2px 6px 2px rgba(0,0,0,0.45)"></div>
<svg style="left:1214px;top:1135px;" width="10" height="12" viewBox="0 0 10 12"><path d="M2 1 L7.5 6 L2 11" fill="none" stroke="#f0f0f0" stroke-width="1.4"/></svg>
<div class="t" style="left:1227.5px;top:1132.31px;font-size:16px;line-height:16px;color:#e6e6e6;letter-spacing:0.2px;text-shadow:0 1px 2px rgba(0,0,0,0.5)">Viewer</div>
<div class="a" style="left:1365px;top:1135px;width:1.6px;height:10px;background:#b9a592;"></div>
<div class="a" style="left:1368.5px;top:1135px;width:1.6px;height:10px;background:#b9a592;"></div>
<svg style="left:1188.8px;top:1122px;" width="16" height="16" viewBox="0 0 16 16"><circle cx="8" cy="8" r="6.4" fill="#c7c729" stroke="#111" stroke-width="1"/></svg>
<svg style="left:1188.8px;top:1142.3px;" width="16" height="16" viewBox="0 0 16 16"><circle cx="8" cy="8" r="6.4" fill="#a1a1a1" stroke="#111" stroke-width="1"/></svg>
<svg style="left:1374.1px;top:1132.7px;" width="16" height="16" viewBox="0 0 16 16"><circle cx="8" cy="8" r="6.4" fill="#63c763" stroke="#111" stroke-width="1"/></svg>
<div class="a" style="left:1194.8px;top:1180.8px;width:187.3px;height:162.1px;background:#303030;border-radius:6px;box-shadow:0 2px 6px 2px rgba(0,0,0,0.45);overflow:hidden"><div class="a" style="left:0;top:0;width:187.3px;height:27.6px;background:#3e1d26"></div></div>
<svg style="left:1208.5px;top:1191px;" width="14" height="9" viewBox="0 0 14 9"><path d="M1.5 1.5 L6.5 6.5 L11.5 1.5" fill="none" stroke="#e6e6e6" stroke-width="1.4"/></svg>
<div class="t" style="left:1227.5px;top:1186.61px;font-size:16px;line-height:16px;color:#e6e6e6;letter-spacing:0.05px;text-shadow:0 1px 2px rgba(0,0,0,0.5)">Material Output</div>
<div class="a" style="left:1208.4px;top:1214.8px;width:160.1px;height:25.6px;background:#282828;border-radius:5px;border:1px solid #3a3a3a;"></div>
<div class="t" style="left:1219.0px;top:1220.01px;font-size:16px;line-height:16px;color:#e6e6e6;">All</div>
<svg style="left:1355px;top:1224.5px;" width="10" height="8" viewBox="0 0 10 8"><path d="M1.4799999999999995 2.2399999999999998 L5 5.76 L8.52 2.2399999999999998" fill="none" stroke="#e6e6e6" stroke-width="1.4"/></svg>
<div class="t" style="left:1208.5px;top:1253.41px;font-size:16px;line-height:16px;color:#e6e6e6;letter-spacing:-0.1px;">Surface</div>
<div class="t" style="left:1208.5px;top:1283.31px;font-size:16px;line-height:16px;color:#e6e6e6;letter-spacing:0.1px;">Volume</div>
<div class="t" style="left:1208.5px;top:1312.41px;font-size:16px;line-height:16px;color:#e6e6e6;letter-spacing:0.1px;">Displacement</div>
<svg style="left:1186.8px;top:1253.3px;" width="16" height="16" viewBox="0 0 16 16"><circle cx="8" cy="8" r="6.4" fill="#63c763" stroke="#111" stroke-width="1"/></svg>
<svg style="left:1186.8px;top:1282.6px;" width="16" height="16" viewBox="0 0 16 16"><circle cx="8" cy="8" r="6.4" fill="#63c763" stroke="#111" stroke-width="1"/></svg>
<svg style="left:1186.8px;top:1312.2px;" width="16" height="16" viewBox="0 0 16 16"><circle cx="8" cy="8" r="6.4" fill="#6363c7" stroke="#111" stroke-width="1"/></svg>
</body></html>
